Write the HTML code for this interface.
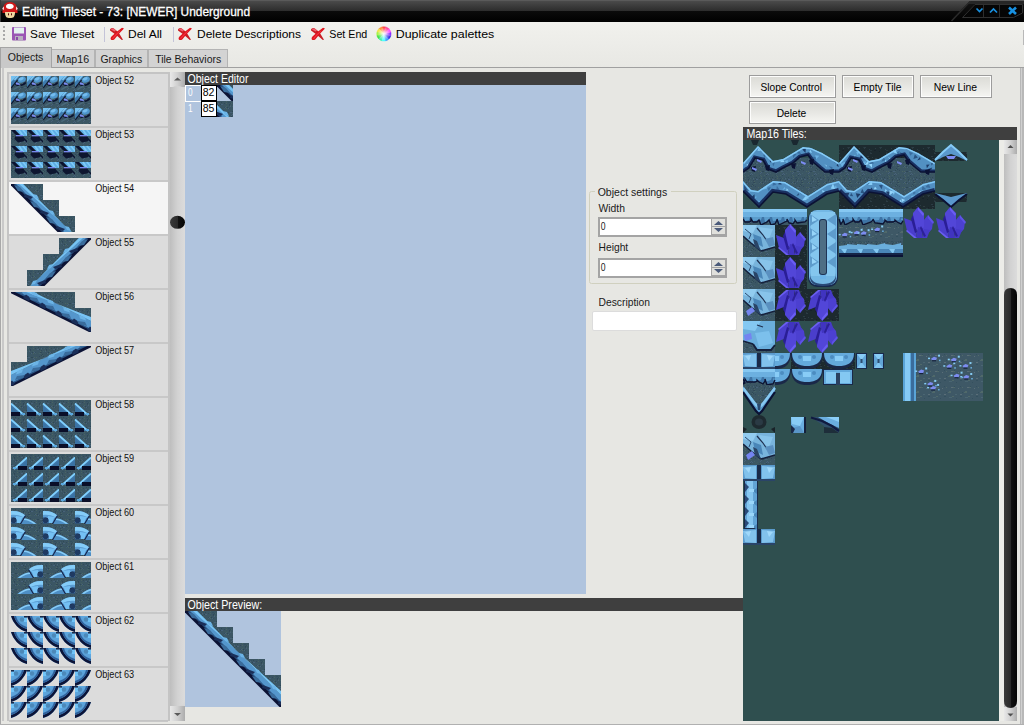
<!DOCTYPE html><html><head><meta charset="utf-8"><style>html,body{margin:0;padding:0;width:1024px;height:725px;overflow:hidden;background:#e7e7e3}svg{display:block}text{font-family:"Liberation Sans",sans-serif}</style></head><body>
<svg width="1024" height="725" viewBox="0 0 1024 725" shape-rendering="crispEdges">
<defs>
<linearGradient id="gTitleTop" x1="0" y1="0" x2="0" y2="1"><stop offset="0" stop-color="#585858"/><stop offset="0.1" stop-color="#4a4a4a"/><stop offset="1" stop-color="#2c2c2c"/></linearGradient>
<linearGradient id="gTitleBot" x1="0" y1="0" x2="0" y2="1"><stop offset="0" stop-color="#161616"/><stop offset="1" stop-color="#000"/></linearGradient>
<linearGradient id="gToolbar" x1="0" y1="0" x2="0" y2="1"><stop offset="0" stop-color="#f1f1ed"/><stop offset="1" stop-color="#e8e8e4"/></linearGradient>
<linearGradient id="gBtn" x1="0" y1="0" x2="0" y2="1"><stop offset="0" stop-color="#dcdcd7"/><stop offset="0.5" stop-color="#e7e7e3"/><stop offset="1" stop-color="#f4f4f1"/></linearGradient>
<linearGradient id="gScroll" x1="0" y1="0" x2="1" y2="0"><stop offset="0" stop-color="#bdbdbd"/><stop offset="0.45" stop-color="#cfcfcf"/><stop offset="1" stop-color="#d8d8d8"/></linearGradient>
<linearGradient id="gScrollBtn" x1="0" y1="0" x2="1" y2="0"><stop offset="0" stop-color="#e8e8e8"/><stop offset="0.5" stop-color="#d0d0d0"/><stop offset="1" stop-color="#acacac"/></linearGradient>
<linearGradient id="gThumbL" x1="0" y1="0" x2="1" y2="0"><stop offset="0" stop-color="#bebebe"/><stop offset="0.5" stop-color="#d2d2d2"/><stop offset="1" stop-color="#dcdcdc"/></linearGradient>
<linearGradient id="gThumbBlk" x1="0" y1="0" x2="1" y2="0"><stop offset="0" stop-color="#3a3a3a"/><stop offset="0.5" stop-color="#2a2a2a"/><stop offset="0.55" stop-color="#111"/><stop offset="1" stop-color="#050505"/></linearGradient>
<radialGradient id="gColor" cx="0.5" cy="0.5" r="0.5"><stop offset="0" stop-color="#fff"/><stop offset="1" stop-color="#fff" stop-opacity="0"/></radialGradient>
<linearGradient id="gX" x1="0" y1="0" x2="0" y2="1"><stop offset="0" stop-color="#e04848"/><stop offset="1" stop-color="#a01818"/></linearGradient>

<pattern id="tex" width="16" height="16" patternUnits="userSpaceOnUse">
<rect x="0" y="0" width="16" height="16" fill="#3b5664" />
<rect x="10" y="4" width="1" height="1" fill="#3e5a60" />
<rect x="1" y="2" width="1" height="1" fill="#456266" />
<rect x="11" y="1" width="1" height="1" fill="#34505e" />
<rect x="1" y="2" width="1" height="1" fill="#3e5a60" />
<rect x="13" y="2" width="1" height="1" fill="#34505e" />
<rect x="2" y="13" width="1" height="1" fill="#42606a" />
<rect x="3" y="7" width="1" height="1" fill="#42606a" />
<rect x="12" y="1" width="1" height="1" fill="#34505e" />
<rect x="1" y="4" width="1" height="1" fill="#33495a" />
<rect x="13" y="4" width="1" height="1" fill="#456266" />
<rect x="9" y="5" width="1" height="1" fill="#456266" />
<rect x="6" y="11" width="1" height="1" fill="#456266" />
<rect x="2" y="1" width="1" height="1" fill="#34505e" />
<rect x="15" y="13" width="1" height="1" fill="#48627a" />
<rect x="14" y="14" width="1" height="1" fill="#48627a" />
<rect x="9" y="7" width="1" height="1" fill="#4a6462" />
<rect x="7" y="2" width="1" height="1" fill="#33495a" />
<rect x="15" y="10" width="1" height="1" fill="#2f4858" />
<rect x="9" y="2" width="1" height="1" fill="#456266" />
<rect x="13" y="5" width="1" height="1" fill="#48627a" />
<rect x="4" y="15" width="1" height="1" fill="#3e5a60" />
<rect x="1" y="2" width="1" height="1" fill="#48627a" />
<rect x="10" y="11" width="1" height="1" fill="#2f4858" />
<rect x="14" y="2" width="1" height="1" fill="#456266" />
<rect x="8" y="15" width="1" height="1" fill="#456266" />
<rect x="1" y="9" width="1" height="1" fill="#2f4858" />
<rect x="9" y="12" width="1" height="1" fill="#48627a" />
<rect x="0" y="14" width="1" height="1" fill="#48627a" />
<rect x="5" y="3" width="1" height="1" fill="#2f4858" />
<rect x="1" y="6" width="1" height="1" fill="#33495a" />
<rect x="4" y="7" width="1" height="1" fill="#3e5a60" />
<rect x="12" y="15" width="1" height="1" fill="#456266" />
<rect x="5" y="14" width="1" height="1" fill="#3e5a60" />
<rect x="8" y="4" width="1" height="1" fill="#3e5a60" />
<rect x="8" y="13" width="1" height="1" fill="#48627a" />
<rect x="12" y="7" width="1" height="1" fill="#4a6462" />
<rect x="2" y="5" width="1" height="1" fill="#4a6462" />
<rect x="7" y="7" width="1" height="1" fill="#42606a" />
<rect x="15" y="5" width="1" height="1" fill="#33495a" />
<rect x="9" y="0" width="1" height="1" fill="#4a6462" />
<rect x="13" y="11" width="1" height="1" fill="#48627a" />
<rect x="4" y="1" width="1" height="1" fill="#2f4858" />
<rect x="12" y="12" width="1" height="1" fill="#3e5a60" />
<rect x="12" y="3" width="1" height="1" fill="#2f4858" />
<rect x="12" y="1" width="1" height="1" fill="#34505e" />
<rect x="2" y="6" width="1" height="1" fill="#2f4858" />
<rect x="5" y="3" width="1" height="1" fill="#48627a" />
<rect x="1" y="3" width="1" height="1" fill="#42606a" />
<rect x="4" y="3" width="1" height="1" fill="#48627a" />
<rect x="0" y="2" width="1" height="1" fill="#34505e" />
<rect x="12" y="4" width="1" height="1" fill="#33495a" />
<rect x="11" y="11" width="1" height="1" fill="#2f4858" />
<rect x="3" y="3" width="1" height="1" fill="#2f4858" />
<rect x="14" y="15" width="1" height="1" fill="#2f4858" />
<rect x="9" y="2" width="1" height="1" fill="#4a6462" />
<rect x="3" y="10" width="1" height="1" fill="#33495a" />
<rect x="15" y="5" width="1" height="1" fill="#42606a" />
<rect x="6" y="11" width="1" height="1" fill="#4a6462" />
<rect x="0" y="9" width="1" height="1" fill="#456266" />
<rect x="8" y="11" width="1" height="1" fill="#4a6462" />
<rect x="11" y="7" width="1" height="1" fill="#48627a" />
<rect x="7" y="6" width="1" height="1" fill="#34505e" />
<rect x="12" y="7" width="1" height="1" fill="#34505e" />
<rect x="15" y="11" width="1" height="1" fill="#42606a" />
<rect x="0" y="8" width="1" height="1" fill="#2f4858" />
<rect x="8" y="6" width="1" height="1" fill="#48627a" />
<rect x="14" y="11" width="1" height="1" fill="#48627a" />
<rect x="2" y="7" width="1" height="1" fill="#456266" />
<rect x="7" y="15" width="1" height="1" fill="#34505e" />
<rect x="10" y="6" width="1" height="1" fill="#2f4858" />
</pattern>
<pattern id="dark" width="16" height="16" patternUnits="userSpaceOnUse">
<rect x="0" y="0" width="16" height="16" fill="#1d2a2f" />
<rect x="0" y="15" width="1" height="1" fill="#18222a" />
<rect x="3" y="12" width="2" height="1" fill="#2c3c44" />
<rect x="5" y="13" width="1" height="1" fill="#18222a" />
<rect x="12" y="14" width="1" height="1" fill="#303c40" />
<rect x="5" y="5" width="1" height="1" fill="#2c3c44" />
<rect x="4" y="14" width="2" height="1" fill="#2c3c44" />
<rect x="11" y="4" width="1" height="1" fill="#2c3c44" />
<rect x="0" y="3" width="2" height="1" fill="#2c3c44" />
<rect x="6" y="6" width="2" height="1" fill="#26363c" />
<rect x="6" y="9" width="2" height="1" fill="#2c3c44" />
<rect x="8" y="13" width="1" height="1" fill="#2c3c44" />
<rect x="11" y="14" width="1" height="1" fill="#303c40" />
<rect x="4" y="0" width="1" height="1" fill="#303c40" />
<rect x="0" y="4" width="1" height="1" fill="#2c3c44" />
<rect x="15" y="3" width="2" height="1" fill="#26363c" />
<rect x="15" y="3" width="1" height="1" fill="#26363c" />
<rect x="6" y="8" width="1" height="1" fill="#26363c" />
<rect x="14" y="0" width="2" height="1" fill="#26363c" />
<rect x="10" y="6" width="2" height="1" fill="#18222a" />
<rect x="15" y="7" width="1" height="1" fill="#18222a" />
</pattern>
<pattern id="pebtex" width="16" height="16" patternUnits="userSpaceOnUse">
<rect x="0" y="0" width="16" height="16" fill="#3e5866" />
<rect x="14" y="4" width="1" height="1" fill="#5a6e78" />
<rect x="12" y="14" width="1" height="1" fill="#34505e" />
<rect x="7" y="13" width="1" height="1" fill="#4a6672" />
<rect x="9" y="3" width="2" height="1" fill="#50696a" />
<rect x="4" y="8" width="2" height="1" fill="#50696a" />
<rect x="7" y="3" width="2" height="1" fill="#5a6e78" />
<rect x="5" y="7" width="2" height="1" fill="#50696a" />
<rect x="12" y="10" width="1" height="1" fill="#5a6e78" />
<rect x="11" y="10" width="2" height="1" fill="#4a6672" />
<rect x="0" y="10" width="2" height="1" fill="#5a6e78" />
<rect x="0" y="12" width="2" height="1" fill="#34505e" />
<rect x="2" y="3" width="1" height="1" fill="#50696a" />
<rect x="2" y="8" width="1" height="1" fill="#34505e" />
<rect x="5" y="8" width="2" height="1" fill="#50696a" />
<rect x="8" y="12" width="2" height="1" fill="#50696a" />
<rect x="10" y="2" width="1" height="1" fill="#34505e" />
<rect x="5" y="13" width="2" height="1" fill="#4a6672" />
<rect x="0" y="2" width="1" height="1" fill="#34505e" />
</pattern>
<linearGradient id="gIce" x1="0" y1="0" x2="1" y2="1"><stop offset="0" stop-color="#7cc8f4"/><stop offset="1" stop-color="#3e7ab0"/></linearGradient>
<linearGradient id="gIceV" x1="0" y1="0" x2="0" y2="1"><stop offset="0" stop-color="#6cb8ec"/><stop offset="1" stop-color="#2e5c8c"/></linearGradient>
<linearGradient id="gPetal" x1="1" y1="0" x2="0" y2="1"><stop offset="0" stop-color="#64b0e8"/><stop offset="0.6" stop-color="#5498d0"/><stop offset="1" stop-color="#2a5088"/></linearGradient>
<linearGradient id="gPetal2" x1="0" y1="0" x2="1" y2="1"><stop offset="0" stop-color="#5aa8e0"/><stop offset="0.55" stop-color="#4a8cc4"/><stop offset="1" stop-color="#1c3c6c"/></linearGradient>
<g id="t52" shape-rendering="geometricPrecision">
<rect x="0" y="0" width="16" height="16" fill="url(#tex)" />
<polygon points="0,0 9,0 4,6 0,11" fill="#3e7cb0" />
<polygon points="0,0 6,0 0,6" fill="#74c0f0" />
<polygon points="6,0 8,0 4,4.5 3,3.5" fill="#80c8f4" />
<ellipse cx="10.8" cy="3.6" rx="4.2" ry="2.9" transform="rotate(-22 10.8 3.6)" fill="#4e96cc"/>
<ellipse cx="10.2" cy="2.8" rx="2.6" ry="1.5" transform="rotate(-22 10.2 2.8)" fill="#74bcee"/>
<path d="M4.5,7.5 C7.5,9.5 11,9 14.5,5.5 L15,7.5 C12,10.5 7.5,11 4,9 Z" fill="#0c1430"/>
<polygon points="4.5,6 8.5,7.5 9,9 5,8.5" fill="#7c8cf4" />
<line x1="0.3" y1="12" x2="6.5" y2="4" stroke="#0c1430" stroke-width="1.1"/>
<polygon points="2,13 9,9 10,10 3,14" fill="#4a6a7c" />
</g>
<g id="t53" shape-rendering="geometricPrecision">
<rect x="0" y="0" width="16" height="16" fill="url(#tex)" />
<polygon points="4,0 16,0 16,6 10,6" fill="#5eaee4" />
<polygon points="7,0 9,0 13,6 11,6" fill="#80ccf8" />
<polygon points="11,0 13,0 16,4 16,6" fill="#80ccf8" />
<polygon points="0,0 4,0 10,6 6,6" fill="#0c1430" />
<polygon points="5,5 12,5 12,6.5 5,6.5" fill="#7888f0" />
<polygon points="4,6.5 12,6.5 13.5,11 7,12.5 3.5,9" fill="#0e1630" />
<line x1="11.5" y1="7" x2="16" y2="12" stroke="#0c1430" stroke-width="1.3"/>
</g>
<g id="t58" shape-rendering="geometricPrecision">
<rect x="0" y="0" width="16" height="16" fill="url(#tex)" />
<polygon points="0,3 13,15 0,15" fill="#4078aa" />
<polygon points="0,6 0,12 6,12" fill="#3a72a4" />
<line x1="0" y1="3.5" x2="13" y2="15" stroke="#80d0ff" stroke-width="1.7"/>
<rect x="0" y="12" width="9" height="4" fill="#0a0e28" />
<rect x="11" y="13" width="3" height="2" fill="#5aa8e0" />
</g>
<g id="t59"><use href="#t58" transform="translate(16,0) scale(-1,1)"/></g>
<g id="t60" shape-rendering="geometricPrecision">
<rect x="0" y="0" width="32" height="16" fill="url(#tex)" />
<path d="M0,3 C5,2.5 10,3.5 14.5,7.5 L10,15 L0,15 Z" fill="#5a9cd2"/>
<path d="M0,3 C5,2.5 10,3.5 14.5,7.5 L12,9 C8,7 4,6.5 0,7 Z" fill="#84ccf8"/>
<path d="M5,8 L12,9 L9,15 L4,15 Z" fill="#74c0f4"/>
<path d="M11,10 C16,10 21,12 26,16 L10,16 Z" fill="#4e8ec4"/>
<path d="M13,10.5 C17,10.5 21,12.5 25,15.5 L23,16 C19,13.5 16,12 13,12 Z" fill="#86ccf8"/>
<ellipse cx="2.6" cy="12.3" rx="2.8" ry="2.8" fill="#0e1634"/>
<path d="M0,9 C2,9 5,10 6,13 L6,16 L0,16 Z" fill="#2c5482" opacity="0.6"/>
<line x1="14.5" y1="7.5" x2="9.5" y2="16" stroke="#142048" stroke-width="1.1"/>
</g>
<g id="t61"><use href="#t60" transform="translate(32,0) scale(-1,1)"/></g>
<g id="t62" shape-rendering="geometricPrecision">
<path d="M0,0 L16,0 L16,16 C8,14 2,7 0,0 Z" fill="url(#gPetal)"/>
<path d="M0,0 C2,7 8,14 16,16 L16,13 C10,11.5 5,7 3,0 Z" fill="#0c1438"/>
<path d="M3,0 C5,7 10,11.5 16,13 L16,11 C11,9.5 6.5,6.5 5,0 Z" fill="#30609a"/>
<rect x="13" y="2" width="3" height="4" fill="#70c4f8" />
<circle cx="11" cy="3.5" r="2.2" fill="#4c88b8"/>
<rect x="13" y="0" width="3" height="1.5" fill="#1a2a48" />
</g>
<g id="t63"><use href="#t62" transform="translate(16,0) scale(-1,1)"/></g>
<g id="slope1" shape-rendering="geometricPrecision">
<polygon points="0,0 32,0 32,16 48,16 48,32 64,32 64,48 80,48 80,64 96,64 96,96" fill="url(#tex)" />
<polygon points="0,0 12,0 96,84 96,96" fill="#5496cc" />
<polygon points="0,0 5,0 96,91 96,96" fill="#2a5282" />
<polygon points="8,0 12,0 96,84 96,80" fill="#78c4f4" />
<polygon points="0,0 3,0 96,93 96,96 94.5,96 0,1.5" fill="#0b1234" />
<polygon points="14,10 22,13 20,15 13,13" fill="#1a2e58" />
<polygon points="3,1 9,3 13,8 7,7" fill="#3a6c9c" />
<polygon points="22,10 26,11 28,15 24,14" fill="#6cb4e6" />
<polygon points="30,26 38,29 36,31 29,29" fill="#1a2e58" />
<polygon points="19,17 25,19 29,24 23,23" fill="#3a6c9c" />
<polygon points="38,26 42,27 44,31 40,30" fill="#6cb4e6" />
<polygon points="46,42 54,45 52,47 45,45" fill="#1a2e58" />
<polygon points="35,33 41,35 45,40 39,39" fill="#3a6c9c" />
<polygon points="54,42 58,43 60,47 56,46" fill="#6cb4e6" />
<polygon points="62,58 70,61 68,63 61,61" fill="#1a2e58" />
<polygon points="51,49 57,51 61,56 55,55" fill="#3a6c9c" />
<polygon points="70,58 74,59 76,63 72,62" fill="#6cb4e6" />
<polygon points="78,74 86,77 84,79 77,77" fill="#1a2e58" />
<polygon points="67,65 73,67 77,72 71,71" fill="#3a6c9c" />
<polygon points="86,74 90,75 92,79 88,78" fill="#6cb4e6" />
<polygon points="94,90 102,93 100,95 93,93" fill="#1a2e58" />
<polygon points="83,81 89,83 93,88 87,87" fill="#3a6c9c" />
<polygon points="102,90 106,91 108,95 104,94" fill="#6cb4e6" />
</g>
<g id="slope2" shape-rendering="geometricPrecision">
<polygon points="0,0 64,0 64,16 80,16 80,40" fill="url(#tex)" />
<polygon points="0,0 22,0 80,29 80,40" fill="#5496cc" />
<polygon points="0,0 8,0 80,37 80,40" fill="#2a5282" />
<polygon points="15,0 22,0 80,29 80,25" fill="#78c4f4" />
<polygon points="0,0 4,0 80,38.5 80,40 78,40 0,1.2" fill="#0b1234" />
<polygon points="12,6 15,2.5 20,6 18,9" fill="#1a2e58" />
<polygon points="2,-3 10,-2 12,2 4,0" fill="#3a6c9c" />
<polygon points="20,-1 26,1 27,4.5 21,2.5" fill="#6cb4e6" />
<polygon points="28,14 31,10.5 36,14 34,17" fill="#1a2e58" />
<polygon points="18,5 26,6 28,10 20,8" fill="#3a6c9c" />
<polygon points="36,7 42,9 43,12.5 37,10.5" fill="#6cb4e6" />
<polygon points="44,22 47,18.5 52,22 50,25" fill="#1a2e58" />
<polygon points="34,13 42,14 44,18 36,16" fill="#3a6c9c" />
<polygon points="52,15 58,17 59,20.5 53,18.5" fill="#6cb4e6" />
<polygon points="60,30 63,26.5 68,30 66,33" fill="#1a2e58" />
<polygon points="50,21 58,22 60,26 52,24" fill="#3a6c9c" />
<polygon points="68,23 74,25 75,28.5 69,26.5" fill="#6cb4e6" />
<polygon points="76,38 79,34.5 84,38 82,41" fill="#1a2e58" />
<polygon points="66,29 74,30 76,34 68,32" fill="#3a6c9c" />
<polygon points="84,31 90,33 91,36.5 85,34.5" fill="#6cb4e6" />
</g>
</defs>
<rect x="0" y="0" width="1024" height="725" fill="#e7e7e3" />
<rect x="0" y="0" width="1024" height="22" fill="url(#gTitleBot)" />
<polygon points="0,0 971,0 960,11 0,11" fill="url(#gTitleTop)" shape-rendering="geometricPrecision"/>
<polygon points="971,0 1024,0 1024,4 967.5,4" fill="#262626" shape-rendering="geometricPrecision"/>
<line x1="971.5" y1="0" x2="951.5" y2="21" stroke="#2a2a2a" stroke-width="1.5" shape-rendering="geometricPrecision"/>
<rect x="0" y="0" width="1024" height="1" fill="#5a5a5a" />
<rect x="0" y="0" width="1" height="22" fill="#3a3a3a" />
<polygon points="962.5,17.5 975,4.5 1022.5,4.5 1022.5,13 1013.5,17.5" fill="#050505" stroke="#303030" stroke-width="1" shape-rendering="geometricPrecision"/>
<line x1="983.5" y1="5" x2="983.5" y2="17" stroke="#2c2c2c"/><line x1="999.5" y1="5" x2="999.5" y2="17" stroke="#2c2c2c"/>
<polyline points="976.5,8.5 979.5,11.5 982.5,8.5" fill="none" stroke="#1890e0" stroke-width="1.7" shape-rendering="geometricPrecision"/>
<polyline points="990,12.5 993.5,9 997,12.5" fill="none" stroke="#1890e0" stroke-width="1.7" shape-rendering="geometricPrecision"/>
<path d="M1009,7.5 L1016,14 M1016,7.5 L1009,14" fill="none" stroke="#1890e0" stroke-width="2.6" shape-rendering="geometricPrecision"/>
<g shape-rendering="geometricPrecision">
<path d="M2.5,11.5 C2.5,5 6,2 10,2 C14,2 17.5,5 17.5,11.5 L17.5,13 L2.5,13 Z" fill="#d01818"/>
<ellipse cx="9.8" cy="6.3" rx="3.8" ry="2.6" fill="#fff"/>
<path d="M2.3,9 C2.6,7.6 3.2,6.8 3.8,6.4 L3.8,10 Z" fill="#fff"/>
<path d="M17.7,9 C17.4,7.6 16.8,6.8 16.2,6.4 L16.2,10 Z" fill="#fff"/>
<path d="M5,12 C5,17 6.5,18 10,18 C13.5,18 15,17 15,12 Z" fill="#f0d8a0"/>
<rect x="8" y="13.3" width="1" height="2" fill="#5a1010"/><rect x="11" y="13.3" width="1" height="2" fill="#5a1010"/>
</g>
<text x="22" y="15.5" font-size="13" fill="#fff" stroke="#fff" stroke-width="0.3" textLength="228" lengthAdjust="spacingAndGlyphs">Editing Tileset - 73: [NEWER] Underground</text>
<rect x="0" y="22" width="1024" height="45" fill="url(#gToolbar)" />
<rect x="1023" y="30" width="1" height="15" fill="#b8b8b8" />
<rect x="3" y="26" width="2" height="2" fill="#a8a8a8" />
<rect x="3" y="30" width="2" height="2" fill="#a8a8a8" />
<rect x="3" y="34" width="2" height="2" fill="#a8a8a8" />
<rect x="3" y="38" width="2" height="2" fill="#a8a8a8" />
<g shape-rendering="geometricPrecision">
<rect x="12" y="27" width="14" height="13.5" rx="1" fill="#9a56b4"/>
<rect x="14" y="27.5" width="10" height="6" fill="#e4f2f0"/>
<rect x="15" y="36" width="8" height="4.5" fill="#b8b0c0"/>
<rect x="16" y="37" width="2" height="3" fill="#8a4aa6"/>
</g>
<text x="30" y="37.8" font-size="11.6" fill="#000" textLength="64.4" lengthAdjust="spacingAndGlyphs">Save Tileset</text>
<rect x="104" y="27" width="1" height="15" fill="#c4c4d8" />
<rect x="173" y="27" width="1" height="15" fill="#c4c4d8" />
<g shape-rendering="geometricPrecision" transform="translate(110,27)">
<path d="M0,2.5 Q0.8,0.3 3.5,1.2 Q7,3.5 9.5,7 L13,12.8 L11.8,13 L5.5,7.5 Q2,5.2 0,3.6 Z" fill="#c81e24"/>
<path d="M0.8,2.2 Q1.5,1 3.2,1.6 Q5,2.6 6,3.6 L4.5,4.5 Q2.5,3.4 0.8,2.2 Z" fill="#f06070"/>
<path d="M12,0.8 L14,1.6 Q9,6.5 4.5,12.2 Q2.5,13.8 0.8,12.6 Q0,11.2 1.5,9.5 Q6,5 12,0.8 Z" fill="#e0141c"/>
<path d="M2,11.5 Q6,6.5 10,3.5 L10.5,4 Q6.5,7.5 3,12 Z" fill="#f03848"/>
</g>
<text x="128" y="37.8" font-size="11.6" fill="#000" textLength="34" lengthAdjust="spacingAndGlyphs">Del All</text>
<g shape-rendering="geometricPrecision" transform="translate(178,27)">
<path d="M0,2.5 Q0.8,0.3 3.5,1.2 Q7,3.5 9.5,7 L13,12.8 L11.8,13 L5.5,7.5 Q2,5.2 0,3.6 Z" fill="#c81e24"/>
<path d="M0.8,2.2 Q1.5,1 3.2,1.6 Q5,2.6 6,3.6 L4.5,4.5 Q2.5,3.4 0.8,2.2 Z" fill="#f06070"/>
<path d="M12,0.8 L14,1.6 Q9,6.5 4.5,12.2 Q2.5,13.8 0.8,12.6 Q0,11.2 1.5,9.5 Q6,5 12,0.8 Z" fill="#e0141c"/>
<path d="M2,11.5 Q6,6.5 10,3.5 L10.5,4 Q6.5,7.5 3,12 Z" fill="#f03848"/>
</g>
<text x="197" y="37.8" font-size="11.6" fill="#000" textLength="104" lengthAdjust="spacingAndGlyphs">Delete Descriptions</text>
<g shape-rendering="geometricPrecision" transform="translate(311,27)">
<path d="M0,2.5 Q0.8,0.3 3.5,1.2 Q7,3.5 9.5,7 L13,12.8 L11.8,13 L5.5,7.5 Q2,5.2 0,3.6 Z" fill="#c81e24"/>
<path d="M0.8,2.2 Q1.5,1 3.2,1.6 Q5,2.6 6,3.6 L4.5,4.5 Q2.5,3.4 0.8,2.2 Z" fill="#f06070"/>
<path d="M12,0.8 L14,1.6 Q9,6.5 4.5,12.2 Q2.5,13.8 0.8,12.6 Q0,11.2 1.5,9.5 Q6,5 12,0.8 Z" fill="#e0141c"/>
<path d="M2,11.5 Q6,6.5 10,3.5 L10.5,4 Q6.5,7.5 3,12 Z" fill="#f03848"/>
</g>
<text x="329.3" y="37.8" font-size="11.6" fill="#000" textLength="38" lengthAdjust="spacingAndGlyphs">Set End</text>
<g shape-rendering="geometricPrecision">
<defs><radialGradient id="cwW" cx="0.5" cy="0.5" r="0.5"><stop offset="0" stop-color="#fff" stop-opacity="1"/><stop offset="0.45" stop-color="#fff" stop-opacity="0.55"/><stop offset="1" stop-color="#fff" stop-opacity="0"/></radialGradient></defs>
<path d="M383.9,33.9 L385.76,26.95 A7.2,7.2 0 0 0 382.04,26.95 Z" fill="#ff3030" stroke="#ff3030" stroke-width="0.4"/><path d="M383.9,33.9 L382.04,26.95 A7.2,7.2 0 0 0 378.81,28.81 Z" fill="#ff8020" stroke="#ff8020" stroke-width="0.4"/><path d="M383.9,33.9 L378.81,28.81 A7.2,7.2 0 0 0 376.95,32.04 Z" fill="#f0e030" stroke="#f0e030" stroke-width="0.4"/><path d="M383.9,33.9 L376.95,32.04 A7.2,7.2 0 0 0 376.95,35.76 Z" fill="#a0f030" stroke="#a0f030" stroke-width="0.4"/><path d="M383.9,33.9 L376.95,35.76 A7.2,7.2 0 0 0 378.81,38.99 Z" fill="#30e030" stroke="#30e030" stroke-width="0.4"/><path d="M383.9,33.9 L378.81,38.99 A7.2,7.2 0 0 0 382.04,40.85 Z" fill="#30f0a0" stroke="#30f0a0" stroke-width="0.4"/><path d="M383.9,33.9 L382.04,40.85 A7.2,7.2 0 0 0 385.76,40.85 Z" fill="#40ffff" stroke="#40ffff" stroke-width="0.4"/><path d="M383.9,33.9 L385.76,40.85 A7.2,7.2 0 0 0 388.99,38.99 Z" fill="#3090ff" stroke="#3090ff" stroke-width="0.4"/><path d="M383.9,33.9 L388.99,38.99 A7.2,7.2 0 0 0 390.85,35.76 Z" fill="#2020e0" stroke="#2020e0" stroke-width="0.4"/><path d="M383.9,33.9 L390.85,35.76 A7.2,7.2 0 0 0 390.85,32.04 Z" fill="#8020ff" stroke="#8020ff" stroke-width="0.4"/><path d="M383.9,33.9 L390.85,32.04 A7.2,7.2 0 0 0 388.99,28.81 Z" fill="#ff40ff" stroke="#ff40ff" stroke-width="0.4"/><path d="M383.9,33.9 L388.99,28.81 A7.2,7.2 0 0 0 385.76,26.95 Z" fill="#ff3090" stroke="#ff3090" stroke-width="0.4"/>
<circle cx="383.9" cy="33.9" r="7.2" fill="url(#cwW)"/>
</g>
<text x="395.7" y="37.8" font-size="11.6" fill="#000" textLength="98.6" lengthAdjust="spacingAndGlyphs">Duplicate palettes</text>
<rect x="0" y="67" width="1024" height="1" fill="#a0a0a0" />
<rect x="51" y="49" width="44" height="18" fill="#b4b4b4" />
<rect x="52" y="50" width="42" height="17" fill="#d3d3d3" />
<text x="56.5" y="62.8" font-size="11" fill="#1a1a1a" textLength="32.6" lengthAdjust="spacingAndGlyphs">Map16</text>
<rect x="95" y="49" width="53" height="18" fill="#b4b4b4" />
<rect x="96" y="50" width="51" height="17" fill="#d3d3d3" />
<text x="100.5" y="62.8" font-size="11" fill="#1a1a1a" textLength="41.8" lengthAdjust="spacingAndGlyphs">Graphics</text>
<rect x="148" y="49" width="80" height="18" fill="#b4b4b4" />
<rect x="149" y="50" width="78" height="17" fill="#d3d3d3" />
<text x="155.2" y="62.8" font-size="11" fill="#1a1a1a" textLength="66" lengthAdjust="spacingAndGlyphs">Tile Behaviors</text>
<rect x="0" y="47" width="52" height="21" fill="#a4a4a4" />
<rect x="1" y="48" width="50" height="20" fill="#c9c9c9" />
<text x="7.7" y="61" font-size="11" fill="#1a1a1a" textLength="35.7" lengthAdjust="spacingAndGlyphs">Objects</text>
<rect x="0" y="68" width="1024" height="657" fill="#e7e7e3" />
<rect x="0" y="68" width="1" height="657" fill="#a8a8a8" />
<rect x="2" y="68" width="2" height="653" fill="#c9c9c9" />
<rect x="1017" y="68" width="3" height="653" fill="#e7e7e3" />
<rect x="1020" y="68" width="4" height="657" fill="#b8b8b8" />
<rect x="1021" y="68" width="1" height="657" fill="#d0d0d0" />
<rect x="0" y="724" width="1024" height="1" fill="#b0b0b0" />
<rect x="7" y="72" width="178" height="649" fill="#c4c4c4" />
<rect x="9" y="74" width="159" height="646" fill="#dcdcdc" />
<rect x="9" y="74" width="159" height="52" fill="#dcdcdc" />
<rect x="9" y="126" width="159" height="2" fill="#c8c8c8" />
<text x="95.2" y="84" font-size="10" fill="#111" textLength="39" lengthAdjust="spacingAndGlyphs">Object 52</text>
<rect x="9" y="128" width="159" height="52" fill="#dcdcdc" />
<rect x="9" y="180" width="159" height="2" fill="#c8c8c8" />
<text x="95.2" y="138" font-size="10" fill="#111" textLength="39" lengthAdjust="spacingAndGlyphs">Object 53</text>
<rect x="9" y="182" width="159" height="52" fill="#f5f5f5" />
<rect x="9" y="234" width="159" height="2" fill="#c8c8c8" />
<text x="95.2" y="192" font-size="10" fill="#111" textLength="39" lengthAdjust="spacingAndGlyphs">Object 54</text>
<rect x="9" y="236" width="159" height="52" fill="#dcdcdc" />
<rect x="9" y="288" width="159" height="2" fill="#c8c8c8" />
<text x="95.2" y="246" font-size="10" fill="#111" textLength="39" lengthAdjust="spacingAndGlyphs">Object 55</text>
<rect x="9" y="290" width="159" height="52" fill="#dcdcdc" />
<rect x="9" y="342" width="159" height="2" fill="#c8c8c8" />
<text x="95.2" y="300" font-size="10" fill="#111" textLength="39" lengthAdjust="spacingAndGlyphs">Object 56</text>
<rect x="9" y="344" width="159" height="52" fill="#dcdcdc" />
<rect x="9" y="396" width="159" height="2" fill="#c8c8c8" />
<text x="95.2" y="354" font-size="10" fill="#111" textLength="39" lengthAdjust="spacingAndGlyphs">Object 57</text>
<rect x="9" y="398" width="159" height="52" fill="#dcdcdc" />
<rect x="9" y="450" width="159" height="2" fill="#c8c8c8" />
<text x="95.2" y="408" font-size="10" fill="#111" textLength="39" lengthAdjust="spacingAndGlyphs">Object 58</text>
<rect x="9" y="452" width="159" height="52" fill="#dcdcdc" />
<rect x="9" y="504" width="159" height="2" fill="#c8c8c8" />
<text x="95.2" y="462" font-size="10" fill="#111" textLength="39" lengthAdjust="spacingAndGlyphs">Object 59</text>
<rect x="9" y="506" width="159" height="52" fill="#dcdcdc" />
<rect x="9" y="558" width="159" height="2" fill="#c8c8c8" />
<text x="95.2" y="516" font-size="10" fill="#111" textLength="39" lengthAdjust="spacingAndGlyphs">Object 60</text>
<rect x="9" y="560" width="159" height="52" fill="#dcdcdc" />
<rect x="9" y="612" width="159" height="2" fill="#c8c8c8" />
<text x="95.2" y="570" font-size="10" fill="#111" textLength="39" lengthAdjust="spacingAndGlyphs">Object 61</text>
<rect x="9" y="614" width="159" height="52" fill="#dcdcdc" />
<rect x="9" y="666" width="159" height="2" fill="#c8c8c8" />
<text x="95.2" y="624" font-size="10" fill="#111" textLength="39" lengthAdjust="spacingAndGlyphs">Object 62</text>
<rect x="9" y="668" width="159" height="52" fill="#dcdcdc" />
<rect x="9" y="720" width="159" height="2" fill="#c8c8c8" />
<text x="95.2" y="678" font-size="10" fill="#111" textLength="39" lengthAdjust="spacingAndGlyphs">Object 63</text>
<rect x="9" y="720" width="159" height="1" fill="#c4c4c4" />
<clipPath id="clipT"><rect x="0" y="0" width="80" height="48"/></clipPath>
<g transform="translate(11,76)" clip-path="url(#clipT)">
<use href="#t52" x="0" y="0"/>
<use href="#t52" x="16" y="0"/>
<use href="#t52" x="32" y="0"/>
<use href="#t52" x="48" y="0"/>
<use href="#t52" x="64" y="0"/>
<use href="#t52" x="0" y="16"/>
<use href="#t52" x="16" y="16"/>
<use href="#t52" x="32" y="16"/>
<use href="#t52" x="48" y="16"/>
<use href="#t52" x="64" y="16"/>
<use href="#t52" x="0" y="32"/>
<use href="#t52" x="16" y="32"/>
<use href="#t52" x="32" y="32"/>
<use href="#t52" x="48" y="32"/>
<use href="#t52" x="64" y="32"/>
</g>
<g transform="translate(11,130)" clip-path="url(#clipT)">
<use href="#t53" x="0" y="0"/>
<use href="#t53" x="16" y="0"/>
<use href="#t53" x="32" y="0"/>
<use href="#t53" x="48" y="0"/>
<use href="#t53" x="64" y="0"/>
<use href="#t53" x="0" y="16"/>
<use href="#t53" x="16" y="16"/>
<use href="#t53" x="32" y="16"/>
<use href="#t53" x="48" y="16"/>
<use href="#t53" x="64" y="16"/>
<use href="#t53" x="0" y="32"/>
<use href="#t53" x="16" y="32"/>
<use href="#t53" x="32" y="32"/>
<use href="#t53" x="48" y="32"/>
<use href="#t53" x="64" y="32"/>
</g>
<g transform="translate(11,184)" clip-path="url(#clipT)">
<use href="#slope1"/>
</g>
<g transform="translate(11,238)" clip-path="url(#clipT)">
<use href="#slope1" transform="translate(80,0) scale(-1,1)"/>
</g>
<g transform="translate(11,292)" clip-path="url(#clipT)">
<use href="#slope2"/>
</g>
<g transform="translate(11,346)" clip-path="url(#clipT)">
<use href="#slope2" transform="translate(80,0) scale(-1,1)"/>
</g>
<g transform="translate(11,400)" clip-path="url(#clipT)">
<use href="#t58" x="0" y="0"/>
<use href="#t58" x="16" y="0"/>
<use href="#t58" x="32" y="0"/>
<use href="#t58" x="48" y="0"/>
<use href="#t58" x="64" y="0"/>
<use href="#t58" x="0" y="16"/>
<use href="#t58" x="16" y="16"/>
<use href="#t58" x="32" y="16"/>
<use href="#t58" x="48" y="16"/>
<use href="#t58" x="64" y="16"/>
<use href="#t58" x="0" y="32"/>
<use href="#t58" x="16" y="32"/>
<use href="#t58" x="32" y="32"/>
<use href="#t58" x="48" y="32"/>
<use href="#t58" x="64" y="32"/>
</g>
<g transform="translate(11,454)" clip-path="url(#clipT)">
<use href="#t59" x="0" y="0"/>
<use href="#t59" x="16" y="0"/>
<use href="#t59" x="32" y="0"/>
<use href="#t59" x="48" y="0"/>
<use href="#t59" x="64" y="0"/>
<use href="#t59" x="0" y="16"/>
<use href="#t59" x="16" y="16"/>
<use href="#t59" x="32" y="16"/>
<use href="#t59" x="48" y="16"/>
<use href="#t59" x="64" y="16"/>
<use href="#t59" x="0" y="32"/>
<use href="#t59" x="16" y="32"/>
<use href="#t59" x="32" y="32"/>
<use href="#t59" x="48" y="32"/>
<use href="#t59" x="64" y="32"/>
</g>
<g transform="translate(11,508)" clip-path="url(#clipT)">
<use href="#t60" x="0" y="0"/>
<use href="#t60" x="32" y="0"/>
<use href="#t60" x="64" y="0"/>
<use href="#t60" x="0" y="16"/>
<use href="#t60" x="32" y="16"/>
<use href="#t60" x="64" y="16"/>
<use href="#t60" x="0" y="32"/>
<use href="#t60" x="32" y="32"/>
<use href="#t60" x="64" y="32"/>
</g>
<g transform="translate(11,562)" clip-path="url(#clipT)">
<use href="#t61" x="0" y="0"/>
<use href="#t61" x="32" y="0"/>
<use href="#t61" x="64" y="0"/>
<use href="#t61" x="0" y="16"/>
<use href="#t61" x="32" y="16"/>
<use href="#t61" x="64" y="16"/>
<use href="#t61" x="0" y="32"/>
<use href="#t61" x="32" y="32"/>
<use href="#t61" x="64" y="32"/>
</g>
<g transform="translate(11,616)" clip-path="url(#clipT)">
<use href="#t62" x="0" y="0"/>
<use href="#t62" x="16" y="0"/>
<use href="#t62" x="32" y="0"/>
<use href="#t62" x="48" y="0"/>
<use href="#t62" x="64" y="0"/>
<use href="#t62" x="0" y="16"/>
<use href="#t62" x="16" y="16"/>
<use href="#t62" x="32" y="16"/>
<use href="#t62" x="48" y="16"/>
<use href="#t62" x="64" y="16"/>
<use href="#t62" x="0" y="32"/>
<use href="#t62" x="16" y="32"/>
<use href="#t62" x="32" y="32"/>
<use href="#t62" x="48" y="32"/>
<use href="#t62" x="64" y="32"/>
</g>
<g transform="translate(11,670)" clip-path="url(#clipT)">
<use href="#t63" x="0" y="0"/>
<use href="#t63" x="16" y="0"/>
<use href="#t63" x="32" y="0"/>
<use href="#t63" x="48" y="0"/>
<use href="#t63" x="64" y="0"/>
<use href="#t63" x="0" y="16"/>
<use href="#t63" x="16" y="16"/>
<use href="#t63" x="32" y="16"/>
<use href="#t63" x="48" y="16"/>
<use href="#t63" x="64" y="16"/>
<use href="#t63" x="0" y="32"/>
<use href="#t63" x="16" y="32"/>
<use href="#t63" x="32" y="32"/>
<use href="#t63" x="48" y="32"/>
<use href="#t63" x="64" y="32"/>
</g>
<rect x="168" y="72" width="2" height="649" fill="#c4c4c4" />
<rect x="170" y="72" width="15" height="649" fill="url(#gScroll)" />
<rect x="170" y="72" width="15" height="15" fill="url(#gScrollBtn)" />
<rect x="170" y="706" width="15" height="15" fill="url(#gScrollBtn)" />
<path d="M170,93 Q170,86 177.5,86 Q185,86 185,93 L185,699 Q185,706 177.5,706 Q170,706 170,699 Z" fill="url(#gThumbL)" shape-rendering="geometricPrecision"/>
<path d="M174,80.5 L177.5,77.5 L181,80.5 Z" fill="#5a5a5a" shape-rendering="geometricPrecision"/>
<path d="M174,713 L177.5,716 L181,713 Z" fill="#5a5a5a" shape-rendering="geometricPrecision"/>
<ellipse cx="177.5" cy="222.3" rx="7.5" ry="6.5" fill="url(#gThumbBlk)" shape-rendering="geometricPrecision"/>
<rect x="185" y="72" width="401" height="13" fill="#3f3f3f" />
<text x="187.5" y="83" font-size="12" fill="#fff" textLength="61" lengthAdjust="spacingAndGlyphs">Object Editor</text>
<rect x="185" y="85" width="401" height="509" fill="#b0c4de" />
<rect x="185" y="85" width="16" height="16" fill="none" stroke="#fff" stroke-width="1" transform="translate(0.5,0.5)" width="15" height="15"/>
<text x="188" y="96" font-size="11" fill="#fff" textLength="4.6" lengthAdjust="spacingAndGlyphs">0</text>
<text x="188" y="112" font-size="11" fill="#fff" textLength="4.6" lengthAdjust="spacingAndGlyphs">1</text>
<rect x="201" y="85" width="16" height="16" fill="#000" />
<rect x="202" y="86" width="14" height="14" fill="#fff" />
<text x="202.7" y="96" font-size="11" fill="#000" textLength="11.7" lengthAdjust="spacingAndGlyphs">82</text>
<rect x="201" y="101" width="16" height="16" fill="#000" />
<rect x="202" y="102" width="14" height="14" fill="#fff" />
<text x="202.7" y="112" font-size="11" fill="#000" textLength="11.7" lengthAdjust="spacingAndGlyphs">85</text>
<clipPath id="clip82"><rect x="217" y="85" width="16" height="16"/></clipPath><g clip-path="url(#clip82)"><use href="#slope1" x="217" y="85"/></g>
<clipPath id="clip85"><rect x="217" y="101" width="16" height="16"/></clipPath><g clip-path="url(#clip85)"><use href="#slope1" x="201" y="101"/></g>
<rect x="185" y="598" width="558" height="13" fill="#3f3f3f" />
<text x="187.4" y="609" font-size="12" fill="#fff" textLength="74.8" lengthAdjust="spacingAndGlyphs">Object Preview:</text>
<rect x="185" y="611" width="96" height="96" fill="#b0c4de" />
<clipPath id="clipPrev"><rect x="185" y="611" width="96" height="96"/></clipPath><g clip-path="url(#clipPrev)"><use href="#slope1" x="185" y="611"/></g>
<rect x="749" y="75" width="87" height="23" fill="#9c9c9c" />
<rect x="750" y="76" width="85" height="21" fill="#fdfdfc" />
<rect x="751" y="77" width="83" height="19" fill="url(#gBtn)" />
<text x="760.5" y="91" font-size="11.4" fill="#000" textLength="61.5" lengthAdjust="spacingAndGlyphs">Slope Control</text>
<rect x="842" y="75" width="72" height="23" fill="#9c9c9c" />
<rect x="843" y="76" width="70" height="21" fill="#fdfdfc" />
<rect x="844" y="77" width="68" height="19" fill="url(#gBtn)" />
<text x="853.6" y="91" font-size="11.4" fill="#000" textLength="47.8" lengthAdjust="spacingAndGlyphs">Empty Tile</text>
<rect x="920" y="75" width="72" height="23" fill="#9c9c9c" />
<rect x="921" y="76" width="70" height="21" fill="#fdfdfc" />
<rect x="922" y="77" width="68" height="19" fill="url(#gBtn)" />
<text x="933.8" y="91" font-size="11.4" fill="#000" textLength="43.3" lengthAdjust="spacingAndGlyphs">New Line</text>
<rect x="749" y="101" width="87" height="23" fill="#9c9c9c" />
<rect x="750" y="102" width="85" height="21" fill="#fdfdfc" />
<rect x="751" y="103" width="83" height="19" fill="url(#gBtn)" />
<text x="776.7" y="117" font-size="11.4" fill="#000" textLength="29.6" lengthAdjust="spacingAndGlyphs">Delete</text>
<rect x="589.5" y="191.5" width="147" height="92" rx="2" fill="none" stroke="#d0d0bf" shape-rendering="geometricPrecision"/>
<rect x="595" y="186" width="76" height="10" fill="#e7e7e3" />
<text x="597.7" y="195.6" font-size="11.2" fill="#1a1a1a" textLength="69.5" lengthAdjust="spacingAndGlyphs">Object settings</text>
<text x="598.5" y="211.7" font-size="11.2" fill="#1a1a1a" textLength="26.5" lengthAdjust="spacingAndGlyphs">Width</text>
<text x="598.5" y="251.2" font-size="11.2" fill="#1a1a1a" textLength="29.7" lengthAdjust="spacingAndGlyphs">Height</text>
<rect x="598" y="217" width="129" height="20" fill="#a4a4a4" />
<rect x="600" y="219" width="125" height="16" fill="#fff" />
<rect x="711" y="219" width="14" height="16" fill="#a4a4a4" />
<rect x="712" y="219" width="13" height="7" fill="#e0e0dc" />
<rect x="712" y="227" width="13" height="7" fill="#e0e0dc" />
<path d="M714,225 L718.5,221 L723,225 Z" fill="#4a5a7a" shape-rendering="geometricPrecision"/>
<path d="M714,228 L718.5,232 L723,228 Z" fill="#4a5a7a" shape-rendering="geometricPrecision"/>
<text x="600.8" y="230" font-size="11" fill="#222" textLength="4.8" lengthAdjust="spacingAndGlyphs">0</text>
<rect x="598" y="258" width="129" height="20" fill="#a4a4a4" />
<rect x="600" y="260" width="125" height="16" fill="#fff" />
<rect x="711" y="260" width="14" height="16" fill="#a4a4a4" />
<rect x="712" y="260" width="13" height="7" fill="#e0e0dc" />
<rect x="712" y="268" width="13" height="7" fill="#e0e0dc" />
<path d="M714,266 L718.5,262 L723,266 Z" fill="#4a5a7a" shape-rendering="geometricPrecision"/>
<path d="M714,269 L718.5,273 L723,269 Z" fill="#4a5a7a" shape-rendering="geometricPrecision"/>
<text x="600.8" y="271" font-size="11" fill="#222" textLength="4.8" lengthAdjust="spacingAndGlyphs">0</text>
<text x="598.5" y="305.8" font-size="11.2" fill="#1a1a1a" textLength="51.5" lengthAdjust="spacingAndGlyphs">Description</text>
<rect x="592.5" y="311.5" width="144" height="19" rx="1.5" fill="#fff" stroke="#dcdcdc" shape-rendering="geometricPrecision"/>
<rect x="743" y="127" width="274" height="13" fill="#3f3f3f" />
<text x="746.5" y="137.6" font-size="12.4" fill="#fff" textLength="60.2" lengthAdjust="spacingAndGlyphs">Map16 Tiles:</text>
<rect x="743" y="140" width="256" height="581" fill="#2f4f4f" />
<g shape-rendering="geometricPrecision">
<clipPath id="clipM16"><rect x="743" y="140" width="256" height="581"/></clipPath>
<g clip-path="url(#clipM16)">
<rect x="839" y="145" width="96" height="64" fill="url(#dark)" />
<rect x="743" y="158" width="192" height="40" fill="url(#tex)" />
<polygon points="743,140 743,163 758,146 773,161 783,159 803,147 811,148 822,153 839,163 839,140" fill="#2f4f4f" />
<polygon points="743,209 743,191 759,207 773,192 786,194 807,207 827,194 839,191 839,209" fill="#2f4f4f" />
<clipPath id="rc1"><polygon points="743,163 758,146 773,161 783,159 803,147 811,148 822,153 839,163 839,172 825,172 820,168 813,162 808,155 800,157 793,163 783,168 776,172 768,169 763,160 755,158 749,168 743,172"/></clipPath>
<polygon points="743,163 758,146 773,161 783,159 803,147 811,148 822,153 839,163 839,172 825,172 820,168 813,162 808,155 800,157 793,163 783,168 776,172 768,169 763,160 755,158 749,168 743,172" fill="#5290c2" />
<g clip-path="url(#rc1)">
<polygon points="744.357,167.5 749.168,167.307 748.47,172.31" fill="#2a5482" />
<polygon points="746.554,164.579 750.629,162.956 747.79,168.654" fill="#94d4fa" />
<polygon points="750.616,163.382 754.702,165.311 754.558,167.468" fill="#6cb2e4" />
<polygon points="753.869,159.167 756.527,157.928 754.512,161.825" fill="#86ccf6" />
<polygon points="757.334,150.691 761.312,150.768 759.881,146.714" fill="#94d4fa" />
<polygon points="758.014,147.779 762.151,149.769 762.133,151.916" fill="#2a5482" />
<polygon points="763.123,154.961 766.198,153.08 764.855,158.035" fill="#3a6ea0" />
<polygon points="765.201,161.82 768.667,163.21 765.203,165.287" fill="#86ccf6" />
<polygon points="769.781,159.252 773.22,158.842 770.032,162.691" fill="#1e3c68" />
<polygon points="772.336,163.764 775.053,161.824 773.45,166.481" fill="#3a6ea0" />
<polygon points="773.673,168.229 776.2,169.417 774.122,170.756" fill="#2a5482" />
<polygon points="780.237,162.269 784.567,161.946 781.899,157.939" fill="#94d4fa" />
<polygon points="784.683,160.906 787.858,160.123 787.492,164.08" fill="#6cb2e4" />
<polygon points="787.749,166.113 791.754,164.514 791.711,170.118" fill="#6cb2e4" />
<polygon points="792.766,154.226 796.792,153.771 793.065,158.252" fill="#3a6ea0" />
<polygon points="797.331,153.589 801.334,154.077 797.84,149.585" fill="#3a6ea0" />
<polygon points="802.329,149.624 805.795,148.241 805.477,153.089" fill="#1e3c68" />
<polygon points="805.902,149.789 809.974,148.575 809.771,145.717" fill="#6cb2e4" />
<polygon points="809.414,152.595 812.174,152.644 810.118,149.835" fill="#86ccf6" />
<polygon points="811.942,156.842 815.933,156.922 815.651,160.833" fill="#3a6ea0" />
<polygon points="815.13,155.191 819.264,155.648 816.288,159.325" fill="#6cb2e4" />
<polygon points="821.08,154.204 824.608,152.446 821.702,150.675" fill="#94d4fa" />
<polygon points="824.257,164.085 826.987,165.649 826.934,166.816" fill="#94d4fa" />
<polygon points="828.757,166.287 832.444,167.091 832.307,169.974" fill="#3a6ea0" />
<polygon points="833.043,161.169 835.711,160.445 835.71,163.838" fill="#3a6ea0" />
<polygon points="836.676,165.943 839.287,166.891 837.014,163.332" fill="#1e3c68" />
<polyline points="743,163 758,146 773,161 783,159 803,147 811,148 822,153 839,163" fill="none" stroke="#86ccf8" stroke-width="3"/>
<polyline points="743,172 749,168 755,158 763,160 768,169 776,172 783,168 793,163 800,157 808,155 813,162 820,168 825,172 839,172" fill="none" stroke="#1a3060" stroke-width="5"/>
</g>
<polyline points="743,172 749,168 755,158 763,160 768,169 776,172 783,168 793,163 800,157 808,155 813,162 820,168 825,172 839,172" fill="none" stroke="#0b1234" stroke-width="1.6"/>
<clipPath id="rc2"><polygon points="743,181 751,190 758,191 773,181 785,182 808,196 827,184 839,181 839,191 827,194 807,207 786,194 773,192 759,207 743,191"/></clipPath>
<polygon points="743,181 751,190 758,191 773,181 785,182 808,196 827,184 839,181 839,191 827,194 807,207 786,194 773,192 759,207 743,191" fill="#5290c2" />
<g clip-path="url(#rc2)">
<polygon points="743.938,189.222 748.69,190.999 744.082,184.47" fill="#2a5482" />
<polygon points="747.194,192.343 750.65,190.393 747.444,195.799" fill="#6cb2e4" />
<polygon points="750.038,198.858 754.738,198.179 754.429,194.159" fill="#1e3c68" />
<polygon points="754.084,198.986 756.793,197.105 755.713,196.276" fill="#6cb2e4" />
<polygon points="758.084,200.561 760.866,201.201 759.437,203.343" fill="#6cb2e4" />
<polygon points="763.13,189.869 767.159,188.548 766.779,185.84" fill="#6cb2e4" />
<polygon points="767.369,187.928 770.881,186.722 768.882,191.439" fill="#3a6ea0" />
<polygon points="772.551,185.759 776.509,184.599 773.084,181.801" fill="#3a6ea0" />
<polygon points="776.348,189.918 780.626,191.205 776.831,185.639" fill="#3a6ea0" />
<polygon points="778.101,184.352 781.636,184.432 780.477,180.817" fill="#1e3c68" />
<polygon points="782.281,190.232 785.477,188.398 784.546,187.037" fill="#6cb2e4" />
<polygon points="786.185,190.845 788.732,190.465 786.668,188.297" fill="#94d4fa" />
<polygon points="789.743,187.155 792.361,185.616 790.029,184.538" fill="#1e3c68" />
<polygon points="796.341,196.064 799.339,195.088 798.482,193.065" fill="#2a5482" />
<polygon points="798.55,191.574 801.616,191.732 801.453,194.64" fill="#3a6ea0" />
<polygon points="801.842,200.379 806.607,200.021 806.096,195.613" fill="#86ccf6" />
<polygon points="804.665,199.052 808.729,198.559 806.976,194.988" fill="#86ccf6" />
<polygon points="809.762,201.749 812.774,203.214 812.167,204.761" fill="#1e3c68" />
<polygon points="812.611,202.188 817.562,202.336 816.526,197.237" fill="#3a6ea0" />
<polygon points="816.595,198.036 819.134,196.367 817.715,195.497" fill="#6cb2e4" />
<polygon points="822.319,192.343 824.89,192.059 822.41,189.772" fill="#86ccf6" />
<polygon points="825.809,193.996 829.485,195.599 827.714,190.32" fill="#6cb2e4" />
<polygon points="830.783,188.487 835.656,189.519 832.924,183.615" fill="#86ccf6" />
<polygon points="834.325,188.223 837.236,189.597 835.955,185.312" fill="#6cb2e4" />
<polygon points="837.685,190.922 842.36,189.755 841.663,186.247" fill="#6cb2e4" />
<polyline points="743,181 751,190 758,191 773,181 785,182 808,196 827,184 839,181" fill="none" stroke="#80c8f6" stroke-width="3"/>
<polyline points="743,191 759,207 773,192 786,194 807,207 827,194 839,191" fill="none" stroke="#1a3060" stroke-width="6"/>
</g>
<polyline points="743,191 759,207 773,192 786,194 807,207 827,194 839,191" fill="none" stroke="#0b1234" stroke-width="1.6"/>
<polygon points="751,167 756,166 755,172 752,171" fill="#0b1234" />
<polygon points="765,166 770,165 769,171 766,170" fill="#0b1234" />
<polygon points="791,164 796,163 795,169 792,168" fill="#0b1234" />
<polygon points="809,160 814,159 813,165 810,164" fill="#0b1234" />
<polygon points="829,170 834,169 833,175 830,174" fill="#0b1234" />
<polygon points="757,159 762,161 761,163 757,161" fill="#7c8cf4" />
<polygon points="752,167 757,169 756,171 752,169" fill="#7c8cf4" />
<polygon points="801,161 806,163 805,165 801,163" fill="#7c8cf4" />
<polygon points="839,145 839,163 854,146 869,161 879,159 899,147 907,148 918,153 935,163 935,145" fill="url(#dark)" />
<polygon points="839,209 839,191 855,207 869,192 882,194 903,207 923,194 935,191 935,209" fill="url(#dark)" />
<clipPath id="rc3"><polygon points="839,163 854,146 869,161 879,159 899,147 907,148 918,153 935,163 935,172 921,172 916,168 909,162 904,155 896,157 889,163 879,168 872,172 864,169 859,160 851,158 845,168 839,172"/></clipPath>
<polygon points="839,163 854,146 869,161 879,159 899,147 907,148 918,153 935,163 935,172 921,172 916,168 909,162 904,155 896,157 889,163 879,168 872,172 864,169 859,160 851,158 845,168 839,172" fill="#5290c2" />
<g clip-path="url(#rc3)">
<polygon points="840.719,163.861 844.559,161.88 842.167,167.7" fill="#6cb2e4" />
<polygon points="843.548,162.451 848.051,160.939 843.968,166.953" fill="#6cb2e4" />
<polygon points="845.198,161.824 848.732,160.901 846.87,165.359" fill="#2a5482" />
<polygon points="849.019,160.753 853.858,160.853 849.545,155.914" fill="#2a5482" />
<polygon points="852.854,156.627 855.677,154.769 853.293,159.45" fill="#86ccf6" />
<polygon points="856.061,151.96 859.449,151.955 857.754,155.348" fill="#6cb2e4" />
<polygon points="859.556,158.167 863.85,158.289 861.431,153.873" fill="#1e3c68" />
<polygon points="861.899,162.326 865.939,161.143 864.449,166.365" fill="#6cb2e4" />
<polygon points="864.589,165.25 868.618,164.181 867.574,161.221" fill="#94d4fa" />
<polygon points="868.708,164.551 871.996,163.423 871.99,167.838" fill="#94d4fa" />
<polygon points="869.67,164.02 873.986,163.572 871.546,159.704" fill="#3a6ea0" />
<polygon points="876.716,166.8 879.718,167.541 876.77,169.802" fill="#1e3c68" />
<polygon points="881.28,161.851 885.832,160.312 883.582,157.298" fill="#3a6ea0" />
<polygon points="885.011,162.564 887.984,162.493 885.083,159.592" fill="#86ccf6" />
<polygon points="887.586,156.509 890.596,158.47 890.376,159.519" fill="#94d4fa" />
<polygon points="893.319,152.619 897.522,153.677 894.693,148.416" fill="#86ccf6" />
<polygon points="896.706,152.568 899.731,150.621 898.827,155.593" fill="#3a6ea0" />
<polygon points="899.725,152.176 904.073,153.864 902.355,156.525" fill="#2a5482" />
<polygon points="905.05,148.895 909.783,150.398 909.351,144.162" fill="#1e3c68" />
<polygon points="909.089,151.668 913.05,152.887 910.112,155.63" fill="#3a6ea0" />
<polygon points="913.396,158.909 917.933,157.442 914.893,154.373" fill="#2a5482" />
<polygon points="917.147,160.499 920.661,159.238 919.949,156.985" fill="#1e3c68" />
<polygon points="919.993,155.267 923.382,156.878 920.161,151.878" fill="#1e3c68" />
<polygon points="926.265,164.857 929.609,164.481 926.873,168.201" fill="#1e3c68" />
<polygon points="928.156,168.973 932.261,167.451 929.779,173.079" fill="#1e3c68" />
<polygon points="931.238,162.759 934.33,162.366 931.394,165.852" fill="#2a5482" />
<polyline points="839,163 854,146 869,161 879,159 899,147 907,148 918,153 935,163" fill="none" stroke="#86ccf8" stroke-width="3"/>
<polyline points="839,172 845,168 851,158 859,160 864,169 872,172 879,168 889,163 896,157 904,155 909,162 916,168 921,172 935,172" fill="none" stroke="#1a3060" stroke-width="5"/>
</g>
<polyline points="839,172 845,168 851,158 859,160 864,169 872,172 879,168 889,163 896,157 904,155 909,162 916,168 921,172 935,172" fill="none" stroke="#0b1234" stroke-width="1.6"/>
<clipPath id="rc4"><polygon points="839,181 847,190 854,191 869,181 881,182 904,196 923,184 935,181 935,191 923,194 903,207 882,194 869,192 855,207 839,191"/></clipPath>
<polygon points="839,181 847,190 854,191 869,181 881,182 904,196 923,184 935,181 935,191 923,194 903,207 882,194 869,192 855,207 839,191" fill="#5290c2" />
<g clip-path="url(#rc4)">
<polygon points="840.728,184.041 843.874,185.664 842.459,180.895" fill="#3a6ea0" />
<polygon points="844.246,193.013 849.233,192.791 847.461,198.001" fill="#1e3c68" />
<polygon points="845.364,197.607 848.829,199.029 847.242,201.071" fill="#94d4fa" />
<polygon points="850.007,195.88 853.218,196.272 851.181,192.669" fill="#2a5482" />
<polygon points="855.812,193.22 860.636,194.086 857.24,198.043" fill="#1e3c68" />
<polygon points="860.647,192.841 864.729,193.86 862.239,188.759" fill="#2a5482" />
<polygon points="864.306,185.581 869.278,183.875 868.809,180.609" fill="#3a6ea0" />
<polygon points="867.947,184.96 872.335,185.054 872.06,180.572" fill="#86ccf6" />
<polygon points="869.577,190.688 872.69,189.148 871.521,187.575" fill="#1e3c68" />
<polygon points="873.472,190.123 876.864,188.62 874.974,186.731" fill="#94d4fa" />
<polygon points="878.822,185.178 882.778,184.634 881.765,189.133" fill="#2a5482" />
<polygon points="884.652,191.831 887.748,191.843 885.607,188.735" fill="#86ccf6" />
<polygon points="885.887,191.463 890.199,191.829 888.617,195.775" fill="#1e3c68" />
<polygon points="889.394,190.35 894.344,191.865 889.59,195.3" fill="#94d4fa" />
<polygon points="892.536,192.358 895.104,190.768 893.927,194.925" fill="#86ccf6" />
<polygon points="899.231,202.313 902.133,202.837 900.314,199.411" fill="#94d4fa" />
<polygon points="901.524,198.537 905.26,199.891 901.802,202.273" fill="#94d4fa" />
<polygon points="905.7,203.325 910.295,203.102 909.134,198.73" fill="#94d4fa" />
<polygon points="910.878,195.977 915.012,195.278 913.146,200.111" fill="#6cb2e4" />
<polygon points="913.225,194.497 915.968,192.811 913.453,191.754" fill="#3a6ea0" />
<polygon points="918.498,192.015 923.057,190.319 919.47,196.574" fill="#86ccf6" />
<polygon points="921.841,190.185 926.252,189.316 922.472,185.774" fill="#3a6ea0" />
<polygon points="925.629,187.286 930.395,188.123 928.342,182.521" fill="#3a6ea0" />
<polygon points="928.752,190.789 932.014,189.674 931.909,194.051" fill="#3a6ea0" />
<polygon points="931.337,190.372 933.897,189.955 932.329,192.933" fill="#1e3c68" />
<polyline points="839,181 847,190 854,191 869,181 881,182 904,196 923,184 935,181" fill="none" stroke="#80c8f6" stroke-width="3"/>
<polyline points="839,191 855,207 869,192 882,194 903,207 923,194 935,191" fill="none" stroke="#1a3060" stroke-width="6"/>
</g>
<polyline points="839,191 855,207 869,192 882,194 903,207 923,194 935,191" fill="none" stroke="#0b1234" stroke-width="1.6"/>
<polygon points="847,167 852,166 851,172 848,171" fill="#0b1234" />
<polygon points="861,166 866,165 865,171 862,170" fill="#0b1234" />
<polygon points="887,164 892,163 891,169 888,168" fill="#0b1234" />
<polygon points="905,160 910,159 909,165 906,164" fill="#0b1234" />
<polygon points="925,170 930,169 929,175 926,174" fill="#0b1234" />
<polygon points="853,159 858,161 857,163 853,161" fill="#7c8cf4" />
<polygon points="848,167 853,169 852,171 848,169" fill="#7c8cf4" />
<polygon points="897,161 902,163 901,165 897,163" fill="#7c8cf4" />
<rect x="935" y="152" width="32" height="9" fill="url(#dark)" />
<polygon points="935,160 943,152 951,145 959,152 967,160 967,161 959,157 951,154 943,157 935,161" fill="#5a98cc" />
<polyline points="935,160 943,152 951,145 959,152 967,160" fill="none" stroke="#86ccf8" stroke-width="2"/>
<polygon points="946,156 956,156 954,159 948,159" fill="#7c8cf4" />
<rect x="935" y="193" width="32" height="9" fill="url(#dark)" />
<polygon points="935,194 943,200 951,207 959,200 967,194 967,193 959,195 951,197 943,195 935,193" fill="#5a98cc" />
<polyline points="935,194 943,200 951,207 959,200 967,194" fill="none" stroke="#0b1234" stroke-width="2"/>
<polygon points="751,140 759,140 757,145 753,145" fill="#1a2830" />
<polygon points="791,140 799,140 797,145 793,145" fill="#1a2830" />
<rect x="743" y="209" width="64" height="16" fill="url(#tex)" />
<polygon points="743,209 807,209 807,219 805,221 797,222 795,219 795,220 793,223 789,222 787,218 787,220 785,221 779,224 777,218 777,219 775,223 771,224 769,219 769,219 767,221 761,224 759,219 759,219 757,221 753,221 751,218 751,220 749,221 745,221 743,218" fill="#3e74a6" />
<rect x="743" y="209" width="64" height="8" fill="#6cb0e0" />
<rect x="743" y="209" width="64" height="3" fill="#86c8f2" />
<polygon points="744,217 750,217 749,220 745,221" fill="#5a9ccc" />
<polygon points="752,217 762,217 761,220 753,221" fill="#5a9ccc" />
<polygon points="764,217 770,217 769,220 765,222" fill="#5a9ccc" />
<polygon points="772,217 782,217 781,220 773,221" fill="#5a9ccc" />
<polygon points="784,217 790,217 789,220 785,221" fill="#5a9ccc" />
<polygon points="792,217 802,217 801,220 793,221" fill="#5a9ccc" />
<polygon points="804,217 806,217 805,220 805,222" fill="#5a9ccc" />
<polyline points="807,220 805,222 797,223 795,220 795,221 793,224 789,223 787,219 787,221 785,222 779,225 777,219 777,220 775,224 771,225 769,220 769,220 767,222 761,225 759,220 759,220 757,222 753,222 751,219 751,221 749,222 745,222 743,219" fill="none" stroke="#0b1234" stroke-width="1.3"/>
<rect x="808" y="210" width="30" height="77" rx="9" fill="#18284c"/>
<rect x="809" y="210" width="28" height="75" rx="8" fill="#74b8e4"/>
<rect x="811" y="212" width="24" height="64" fill="#84c6ee" />
<polygon points="810,214 819,220 810,226" fill="#5e9ccc" />
<polygon points="836,214 827,220 836,226" fill="#5e9ccc" />
<polygon points="812,216 817,220 812,222" fill="#96d4f8" />
<polygon points="810,228 819,234 810,240" fill="#5e9ccc" />
<polygon points="836,228 827,234 836,240" fill="#5e9ccc" />
<polygon points="812,230 817,234 812,236" fill="#96d4f8" />
<polygon points="810,242 819,248 810,254" fill="#5e9ccc" />
<polygon points="836,242 827,248 836,254" fill="#5e9ccc" />
<polygon points="812,244 817,248 812,250" fill="#96d4f8" />
<polygon points="810,256 819,262 810,268" fill="#5e9ccc" />
<polygon points="836,256 827,262 836,268" fill="#5e9ccc" />
<polygon points="812,258 817,262 812,264" fill="#96d4f8" />
<rect x="819.0" y="219" width="8" height="56" rx="3" fill="#1e3456"/>
<rect x="820.0" y="220" width="6" height="54" rx="2" fill="#4e6e84"/>
<rect x="820" y="275" width="6" height="4" fill="#6cb4e8" />
<path d="M810,273 Q810,284 823.0,284 Q836,284 836,273 L836,277 Q836,286 823.0,286 Q810,286 810,277 Z" fill="#2a4a78"/>
<rect x="839" y="209" width="64" height="16" fill="url(#tex)" />
<polygon points="839,209 903,209 903,220 901,223 897,221 895,219 895,220 893,221 887,221 885,219 885,220 883,223 875,222 873,218 873,219 871,221 863,224 861,219 861,219 859,221 855,221 853,218 853,220 851,221 845,224 843,218 843,220 841,223 841,224 839,218" fill="#3e74a6" />
<rect x="839" y="209" width="64" height="8" fill="#6cb0e0" />
<rect x="839" y="209" width="64" height="3" fill="#86c8f2" />
<polygon points="840,217 846,217 845,220 841,222" fill="#5a9ccc" />
<polygon points="848,217 858,217 857,220 849,220" fill="#5a9ccc" />
<polygon points="860,217 868,217 867,220 861,220" fill="#5a9ccc" />
<polygon points="870,217 880,217 879,220 871,221" fill="#5a9ccc" />
<polygon points="882,217 888,217 887,220 883,220" fill="#5a9ccc" />
<polygon points="890,217 900,217 899,220 891,221" fill="#5a9ccc" />
<polygon points="902,217 902,217 901,220 903,220" fill="#5a9ccc" />
<polyline points="903,221 901,224 897,222 895,220 895,221 893,222 887,222 885,220 885,221 883,224 875,223 873,219 873,220 871,222 863,225 861,220 861,220 859,222 855,222 853,219 853,221 851,222 845,225 843,219 843,221 841,224 841,225 839,219" fill="none" stroke="#0b1234" stroke-width="1.3"/>
<rect x="839" y="225" width="64" height="16" fill="url(#pebtex)" />
<polygon points="853.612,232.81 856.612,230.81 859.612,231.81 858.612,234.31 854.612,234.31" fill="#7c8cf0" />
<rect x="854.612" y="234.31" width="4" height="1.2" fill="#15203c" />
<rect x="850.612" y="231.81" width="2" height="1.5" fill="#86ccf4" />
<rect x="860.612" y="228.81" width="2" height="2" fill="#86ccf4" />
<rect x="861.612" y="233.81" width="1.5" height="1.5" fill="#6ab0e0" />
<polygon points="860.608,233.227 863.608,231.227 866.608,232.227 865.608,234.727 861.608,234.727" fill="#7c8cf0" />
<rect x="861.608" y="234.727" width="4" height="1.2" fill="#15203c" />
<rect x="857.608" y="232.227" width="2" height="1.5" fill="#86ccf4" />
<rect x="867.608" y="229.227" width="2" height="2" fill="#86ccf4" />
<rect x="868.608" y="234.227" width="1.5" height="1.5" fill="#6ab0e0" />
<polygon points="874.163,229.459 877.163,227.459 880.163,228.459 879.163,230.959 875.163,230.959" fill="#7c8cf0" />
<rect x="875.163" y="230.959" width="4" height="1.2" fill="#15203c" />
<rect x="871.163" y="228.459" width="2" height="1.5" fill="#86ccf4" />
<rect x="881.163" y="225.459" width="2" height="2" fill="#86ccf4" />
<rect x="882.163" y="230.459" width="1.5" height="1.5" fill="#6ab0e0" />
<polygon points="841.698,234.862 844.698,232.862 847.698,233.862 846.698,236.362 842.698,236.362" fill="#7c8cf0" />
<rect x="842.698" y="236.362" width="4" height="1.2" fill="#15203c" />
<rect x="838.698" y="233.862" width="2" height="1.5" fill="#86ccf4" />
<rect x="848.698" y="230.862" width="2" height="2" fill="#86ccf4" />
<rect x="849.698" y="235.862" width="1.5" height="1.5" fill="#6ab0e0" />
<rect x="839" y="241" width="64" height="16" fill="url(#tex)" />
<polygon points="839,246 847,245 847,244 857,245 857,244 867,245 867,244 877,245 877,245 885,243 885,244 893,245 893,245 901,243 901,245 903,245 903,257 839,257" fill="#6aaedc" />
<rect x="839" y="249" width="64" height="5" fill="#4a86b8" />
<polygon points="841,249 847,249 845,254" fill="#84c8f2" />
<polygon points="857,249 863,249 861,254" fill="#84c8f2" />
<polygon points="873,249 879,249 877,254" fill="#84c8f2" />
<polygon points="889,249 895,249 893,254" fill="#84c8f2" />
<rect x="839" y="253" width="64" height="4" fill="#152446" />
<rect x="839" y="255" width="64" height="2" fill="#0b1234" />
<g transform="translate(903,207)">
<polygon points="1,11 9,14 14,24 13,31 4,24" fill="#4a3ecc" />
<polygon points="25,8 30,15 29,22 22,30 18,22 20,14" fill="#4c40d0" />
<polygon points="15,0 21,6 21,20 16,25 10,19 10,6" fill="#5246d8" />
<polygon points="15,20 20,21 19,31 13,31" fill="#4034c0" />
<polygon points="21,22 27,23 24,31 19,31" fill="#463ac8" />
<polygon points="10,8 14,25 12,26 8,12" fill="#2a1e96" />
<polygon points="18,19 23,29 21,30 17,21" fill="#2c2098" />
<polygon points="4,23 14,31 11,31 3,24" fill="#6a5ef2" />
<polygon points="15,0 21,7 20,9 15,3" fill="#6a5ef2" />
<polygon points="25,8 31,15 30,17 25,11" fill="#5e52e8" />
</g>
<g transform="translate(935,207)">
<polygon points="1,11 9,14 14,24 13,31 4,24" fill="#4a3ecc" />
<polygon points="25,8 30,15 29,22 22,30 18,22 20,14" fill="#4c40d0" />
<polygon points="15,0 21,6 21,20 16,25 10,19 10,6" fill="#5246d8" />
<polygon points="15,20 20,21 19,31 13,31" fill="#4034c0" />
<polygon points="21,22 27,23 24,31 19,31" fill="#463ac8" />
<polygon points="10,8 14,25 12,26 8,12" fill="#2a1e96" />
<polygon points="18,19 23,29 21,30 17,21" fill="#2c2098" />
<polygon points="4,23 14,31 11,31 3,24" fill="#6a5ef2" />
<polygon points="15,0 21,7 20,9 15,3" fill="#6a5ef2" />
<polygon points="25,8 31,15 30,17 25,11" fill="#5e52e8" />
</g>
<rect x="743" y="225" width="32" height="32" fill="url(#tex)" />
<polygon points="743,225 775,225 775,247 761,251 751,243 743,236" fill="#78b4dc" />
<polygon points="743,225 757,225 753,233 743,231" fill="#92ccf0" />
<polygon points="759,227 773,229 769,239 761,235" fill="#88c4ea" />
<polygon points="753,234 761,237 763,247 755,243" fill="#4a86b8" />
<polyline points="743,236 751,243 761,251 775,247" fill="none" stroke="#15203c" stroke-width="1.5"/>
<polyline points="757,228 763,235 767,241" fill="none" stroke="#1e3050" stroke-width="1.2"/>
<polygon points="753,239 757,241 761,251 755,247" fill="#2a4466" />
<polyline points="745,229 751,234 749,239" fill="none" stroke="#2a4a70" stroke-width="1"/>
<polygon points="765,239 773,237 775,245 769,247" fill="#5a90c0" />
<rect x="743" y="257" width="32" height="32" fill="url(#tex)" />
<polygon points="743,257 775,257 775,279 761,283 751,275 743,268" fill="#78b4dc" />
<polygon points="743,257 757,257 753,265 743,263" fill="#92ccf0" />
<polygon points="759,259 773,261 769,271 761,267" fill="#88c4ea" />
<polygon points="753,266 761,269 763,279 755,275" fill="#4a86b8" />
<polyline points="743,268 751,275 761,283 775,279" fill="none" stroke="#15203c" stroke-width="1.5"/>
<polyline points="757,260 763,267 767,273" fill="none" stroke="#1e3050" stroke-width="1.2"/>
<polygon points="753,271 757,273 761,283 755,279" fill="#2a4466" />
<polyline points="745,261 751,266 749,271" fill="none" stroke="#2a4a70" stroke-width="1"/>
<polygon points="765,271 773,269 775,277 769,279" fill="#5a90c0" />
<rect x="743" y="289" width="32" height="32" fill="url(#tex)" />
<polygon points="743,289 775,289 775,311 761,315 751,307 743,300" fill="#78b4dc" />
<polygon points="743,289 757,289 753,297 743,295" fill="#92ccf0" />
<polygon points="759,291 773,293 769,303 761,299" fill="#88c4ea" />
<polygon points="753,298 761,301 763,311 755,307" fill="#4a86b8" />
<polyline points="743,300 751,307 761,315 775,311" fill="none" stroke="#15203c" stroke-width="1.5"/>
<polyline points="757,292 763,299 767,305" fill="none" stroke="#1e3050" stroke-width="1.2"/>
<polygon points="753,303 757,305 761,315 755,311" fill="#2a4466" />
<polyline points="745,293 751,298 749,303" fill="none" stroke="#2a4a70" stroke-width="1"/>
<polygon points="765,303 773,301 775,309 769,311" fill="#5a90c0" />
<polygon points="746,311 752,307 755,311 748,316" fill="#7484f0" />
<rect x="743" y="321" width="32" height="32" fill="url(#tex)" />
<polygon points="743,321 775,321 775,345 771,350 757,350 753,344 743,341" fill="#6aaedc" />
<polygon points="743,321 761,321 755,331 743,329" fill="#84c8f2" />
<polygon points="755,333 769,331 773,343 759,347" fill="#7cc0ec" />
<polyline points="753,344 757,350 771,350 775,345" fill="none" stroke="#15203c" stroke-width="2"/>
<polyline points="743,341 753,344" fill="none" stroke="#15203c" stroke-width="1.5"/>
<polyline points="757,325 763,327" fill="none" stroke="#1e3050" stroke-width="1.2"/>
<polygon points="744,335 751,333 752,339 745,341" fill="#7484f0" />
<rect x="775" y="225" width="32" height="96" fill="url(#dark)" />
<rect x="807" y="289" width="32" height="32" fill="url(#dark)" />
<g transform="translate(775,224)">
<polygon points="1,11 9,14 14,24 13,31 4,24" fill="#4a3ecc" />
<polygon points="25,8 30,15 29,22 22,30 18,22 20,14" fill="#4c40d0" />
<polygon points="15,0 21,6 21,20 16,25 10,19 10,6" fill="#5246d8" />
<polygon points="15,20 20,21 19,31 13,31" fill="#4034c0" />
<polygon points="21,22 27,23 24,31 19,31" fill="#463ac8" />
<polygon points="10,8 14,25 12,26 8,12" fill="#2a1e96" />
<polygon points="18,19 23,29 21,30 17,21" fill="#2c2098" />
<polygon points="4,23 14,31 11,31 3,24" fill="#6a5ef2" />
<polygon points="15,0 21,7 20,9 15,3" fill="#6a5ef2" />
<polygon points="25,8 31,15 30,17 25,11" fill="#5e52e8" />
</g>
<g transform="translate(775,257)">
<polygon points="1,11 9,14 14,24 13,31 4,24" fill="#4a3ecc" />
<polygon points="25,8 30,15 29,22 22,30 18,22 20,14" fill="#4c40d0" />
<polygon points="15,0 21,6 21,20 16,25 10,19 10,6" fill="#5246d8" />
<polygon points="15,20 20,21 19,31 13,31" fill="#4034c0" />
<polygon points="21,22 27,23 24,31 19,31" fill="#463ac8" />
<polygon points="10,8 14,25 12,26 8,12" fill="#2a1e96" />
<polygon points="18,19 23,29 21,30 17,21" fill="#2c2098" />
<polygon points="4,23 14,31 11,31 3,24" fill="#6a5ef2" />
<polygon points="15,0 21,7 20,9 15,3" fill="#6a5ef2" />
<polygon points="25,8 31,15 30,17 25,11" fill="#5e52e8" />
</g>
<g transform="translate(775,321) scale(1,-1)">
<polygon points="1,11 9,14 14,24 13,31 4,24" fill="#4a3ecc" />
<polygon points="25,8 30,15 29,22 22,30 18,22 20,14" fill="#4c40d0" />
<polygon points="15,0 21,6 21,20 16,25 10,19 10,6" fill="#5246d8" />
<polygon points="15,20 20,21 19,31 13,31" fill="#4034c0" />
<polygon points="21,22 27,23 24,31 19,31" fill="#463ac8" />
<polygon points="10,8 14,25 12,26 8,12" fill="#2a1e96" />
<polygon points="18,19 23,29 21,30 17,21" fill="#2c2098" />
<polygon points="4,23 14,31 11,31 3,24" fill="#6a5ef2" />
<polygon points="15,0 21,7 20,9 15,3" fill="#6a5ef2" />
<polygon points="25,8 31,15 30,17 25,11" fill="#5e52e8" />
</g>
<g transform="translate(807,321) scale(1,-1)">
<polygon points="1,11 9,14 14,24 13,31 4,24" fill="#4a3ecc" />
<polygon points="25,8 30,15 29,22 22,30 18,22 20,14" fill="#4c40d0" />
<polygon points="15,0 21,6 21,20 16,25 10,19 10,6" fill="#5246d8" />
<polygon points="15,20 20,21 19,31 13,31" fill="#4034c0" />
<polygon points="21,22 27,23 24,31 19,31" fill="#463ac8" />
<polygon points="10,8 14,25 12,26 8,12" fill="#2a1e96" />
<polygon points="18,19 23,29 21,30 17,21" fill="#2c2098" />
<polygon points="4,23 14,31 11,31 3,24" fill="#6a5ef2" />
<polygon points="15,0 21,7 20,9 15,3" fill="#6a5ef2" />
<polygon points="25,8 31,15 30,17 25,11" fill="#5e52e8" />
</g>
<g transform="translate(775,353) scale(1,-1)">
<polygon points="1,11 9,14 14,24 13,31 4,24" fill="#4a3ecc" />
<polygon points="25,8 30,15 29,22 22,30 18,22 20,14" fill="#4c40d0" />
<polygon points="15,0 21,6 21,20 16,25 10,19 10,6" fill="#5246d8" />
<polygon points="15,20 20,21 19,31 13,31" fill="#4034c0" />
<polygon points="21,22 27,23 24,31 19,31" fill="#463ac8" />
<polygon points="10,8 14,25 12,26 8,12" fill="#2a1e96" />
<polygon points="18,19 23,29 21,30 17,21" fill="#2c2098" />
<polygon points="4,23 14,31 11,31 3,24" fill="#6a5ef2" />
<polygon points="15,0 21,7 20,9 15,3" fill="#6a5ef2" />
<polygon points="25,8 31,15 30,17 25,11" fill="#5e52e8" />
</g>
<g transform="translate(807,353) scale(1,-1)">
<polygon points="1,11 9,14 14,24 13,31 4,24" fill="#4a3ecc" />
<polygon points="25,8 30,15 29,22 22,30 18,22 20,14" fill="#4c40d0" />
<polygon points="15,0 21,6 21,20 16,25 10,19 10,6" fill="#5246d8" />
<polygon points="15,20 20,21 19,31 13,31" fill="#4034c0" />
<polygon points="21,22 27,23 24,31 19,31" fill="#463ac8" />
<polygon points="10,8 14,25 12,26 8,12" fill="#2a1e96" />
<polygon points="18,19 23,29 21,30 17,21" fill="#2c2098" />
<polygon points="4,23 14,31 11,31 3,24" fill="#6a5ef2" />
<polygon points="15,0 21,7 20,9 15,3" fill="#6a5ef2" />
<polygon points="25,8 31,15 30,17 25,11" fill="#5e52e8" />
</g>
<rect x="743" y="353" width="32" height="16" fill="#5a9acc" />
<polygon points="743,355 756,354 756,367 745,366" fill="#82c2ec" />
<polygon points="762,354 775,355 773,366 762,367" fill="#82c2ec" />
<polygon points="745,356 751,355 749,361" fill="#a0d8fa" />
<polygon points="767,355 773,356 769,361" fill="#a0d8fa" />
<rect x="757" y="353" width="4" height="16" fill="#1a2a48" />
<rect x="743" y="367" width="32" height="2" fill="#2a4468" />
<path d="M759,353 L791,353 C791,367.4 781.4,369 775.0,369 C768.6,369 759,367.4 759,353 Z" fill="#1a2848"/>
<path d="M760,353 L790,353 C790,364.2 781.4,366 775.0,366 C768.6,366 760,364.2 760,353 Z" fill="#64aadc"/>
<rect x="771" y="356" width="8" height="5" fill="#88ccf6" />
<circle cx="768.0" cy="357" r="2" fill="#4c8cc0"/><circle cx="782.0" cy="357" r="2" fill="#4c8cc0"/>
<rect x="759" y="353" width="16" height="16" fill="none" />
<rect x="791" y="353" width="64" height="16" fill="url(#dark)" />
<path d="M791,353 L823,353 C823,367.4 813.4,369 807.0,369 C800.6,369 791,367.4 791,353 Z" fill="#1a2848"/>
<path d="M792,353 L822,353 C822,364.2 813.4,366 807.0,366 C800.6,366 792,364.2 792,353 Z" fill="#64aadc"/>
<rect x="803" y="356" width="8" height="5" fill="#88ccf6" />
<circle cx="800.0" cy="357" r="2" fill="#4c8cc0"/><circle cx="814.0" cy="357" r="2" fill="#4c8cc0"/>
<path d="M823,353 L855,353 C855,367.4 845.4,369 839.0,369 C832.6,369 823,367.4 823,353 Z" fill="#1a2848"/>
<path d="M824,353 L854,353 C854,364.2 845.4,366 839.0,366 C832.6,366 824,364.2 824,353 Z" fill="#64aadc"/>
<rect x="835" y="356" width="8" height="5" fill="#88ccf6" />
<circle cx="832.0" cy="357" r="2" fill="#4c8cc0"/><circle cx="846.0" cy="357" r="2" fill="#4c8cc0"/>
<rect x="856" y="353" width="11" height="16" fill="#18284a" />
<rect x="857" y="354" width="9" height="14" fill="#62a6d8" />
<polygon points="857,354 866,354 861.5,360" fill="#88ccf6" />
<polygon points="857,368 866,368 861.5,362" fill="#80c4f0" />
<rect x="860.5" y="359" width="2" height="4" fill="#2c4c70" />
<rect x="873" y="353" width="11" height="16" fill="#18284a" />
<rect x="874" y="354" width="9" height="14" fill="#62a6d8" />
<polygon points="874,354 883,354 878.5,360" fill="#88ccf6" />
<polygon points="874,368 883,368 878.5,362" fill="#80c4f0" />
<rect x="877.5" y="359" width="2" height="4" fill="#2c4c70" />
<rect x="743" y="369" width="32" height="16" fill="url(#tex)" />
<polygon points="743,369 775,369 775,379 773,383 767,384 765,378 765,380 763,383 759,381 757,379 757,380 755,381 747,381 745,378 745,380 743,383 745,382 743,378" fill="#3e74a6" />
<rect x="743" y="369" width="32" height="8" fill="#6cb0e0" />
<rect x="743" y="369" width="32" height="3" fill="#86c8f2" />
<polygon points="744,377 750,377 749,380 745,382" fill="#5a9ccc" />
<polygon points="752,377 762,377 761,380 753,382" fill="#5a9ccc" />
<polygon points="764,377 772,377 771,380 765,382" fill="#5a9ccc" />
<polygon points="774,377 774,377 773,380 775,381" fill="#5a9ccc" />
<polyline points="775,380 773,384 767,385 765,379 765,381 763,384 759,382 757,380 757,381 755,382 747,382 745,379 745,381 743,384 745,383 743,379" fill="none" stroke="#0b1234" stroke-width="1.3"/>
<path d="M759,369 L791,369 C791,383.4 781.4,385 775.0,385 C768.6,385 759,383.4 759,369 Z" fill="#1a2848"/>
<path d="M760,369 L790,369 C790,380.2 781.4,382 775.0,382 C768.6,382 760,380.2 760,369 Z" fill="#64aadc"/>
<rect x="771" y="372" width="8" height="5" fill="#88ccf6" />
<circle cx="768.0" cy="373" r="2" fill="#4c8cc0"/><circle cx="782.0" cy="373" r="2" fill="#4c8cc0"/>
<path d="M791,369 L823,369 C823,383.4 813.4,385 807.0,385 C800.6,385 791,383.4 791,369 Z" fill="#1a2848"/>
<path d="M792,369 L822,369 C822,380.2 813.4,382 807.0,382 C800.6,382 792,380.2 792,369 Z" fill="#64aadc"/>
<rect x="803" y="372" width="8" height="5" fill="#88ccf6" />
<circle cx="800.0" cy="373" r="2" fill="#4c8cc0"/><circle cx="814.0" cy="373" r="2" fill="#4c8cc0"/>
<rect x="823" y="369" width="30" height="16" fill="#1a2848" />
<rect x="824" y="370" width="28" height="14" fill="#64aadc" />
<rect x="826" y="372" width="10" height="11" fill="#84c8f2" />
<rect x="840" y="372" width="10" height="11" fill="#84c8f2" />
<rect x="836" y="373" width="4" height="12" fill="#2a4060" />
<rect x="743" y="353" width="32" height="16" fill="#5a9acc" />
<polygon points="743,355 756,354 756,367 745,366" fill="#82c2ec" />
<polygon points="762,354 775,355 773,366 762,367" fill="#82c2ec" />
<polygon points="745,356 751,355 749,361" fill="#a0d8fa" />
<polygon points="767,355 773,356 769,361" fill="#a0d8fa" />
<rect x="757" y="353" width="4" height="16" fill="#1a2a48" />
<rect x="743" y="367" width="32" height="2" fill="#2a4468" />
<rect x="743" y="369" width="32" height="16" fill="url(#tex)" />
<polygon points="743,369 775,369 775,379 773,383 767,384 765,378 765,380 763,383 759,381 757,379 757,380 755,381 747,381 745,378 745,380 743,383 745,382 743,378" fill="#3e74a6" />
<rect x="743" y="369" width="32" height="8" fill="#6cb0e0" />
<rect x="743" y="369" width="32" height="3" fill="#86c8f2" />
<polygon points="744,377 750,377 749,380 745,382" fill="#5a9ccc" />
<polygon points="752,377 762,377 761,380 753,382" fill="#5a9ccc" />
<polygon points="764,377 772,377 771,380 765,382" fill="#5a9ccc" />
<polygon points="774,377 774,377 773,380 775,381" fill="#5a9ccc" />
<polyline points="775,380 773,384 767,385 765,379 765,381 763,384 759,382 757,380 757,381 755,382 747,382 745,379 745,381 743,384 745,383 743,379" fill="none" stroke="#0b1234" stroke-width="1.3"/>
<polygon points="743,385 775,385 775,393 759,409 743,393" fill="url(#tex)" />
<polygon points="743,392 756,411 759,414 762,411 775,392 775,386 762,403 759,405 756,403 743,386" fill="#5a9acc" />
<polyline points="743,388 756,405 759,407 762,405 775,388" fill="none" stroke="#86c8f2" stroke-width="2.5"/>
<polyline points="743,392 756,411 759,414 762,411 775,392" fill="none" stroke="#0b1234" stroke-width="2.2"/>
<polygon points="757,404 761,404 760,410 758,410" fill="#2a4a70" />
<ellipse cx="759" cy="422" rx="7.5" ry="7" fill="#1e2a30"/>
<ellipse cx="759" cy="422" rx="4" ry="3.5" fill="#2a3a44"/>
<polygon points="743,427 747,429 743,433" fill="#1a2228" />
<polygon points="775,427 771,429 775,433" fill="#1a2228" />
<rect x="791" y="417" width="15" height="16" fill="#6aaee0" />
<polygon points="791,417 804,417 800,426 792,424" fill="#88ccf6" />
<polygon points="792,428 800,426 804,433 793,433" fill="#5a96c8" />
<rect x="804" y="417" width="2" height="16" fill="#15203c" />
<polygon points="791,425 795,429 793,433 791,433" fill="#1a2848" />
<polygon points="811,417 839,417 839,433 824,433 824,426" fill="#30506a" />
<polygon points="818,417 839,417 839,428 830,424" fill="#6aaee0" />
<polygon points="826,417 839,417 839,422 834,420" fill="#8ccff8" />
<polyline points="811,417.5 822,421 832,426 839,431" fill="none" stroke="#101a40" stroke-width="2.2"/>
<polygon points="824,427 832,428 839,433 824,433" fill="#1e2e3a" />
<rect x="903" y="353" width="13" height="48" fill="#5aa4d8" />
<rect x="905" y="353" width="5" height="48" fill="#86cbf6" />
<rect x="911" y="353" width="3" height="48" fill="#3a6c9c" />
<rect x="916" y="353" width="67" height="48" fill="url(#pebtex)" />
<polygon points="927.237,383.901 930.237,381.901 933.237,382.901 932.237,385.401 928.237,385.401" fill="#7c8cf0" />
<rect x="928.237" y="385.401" width="4" height="1.2" fill="#15203c" />
<rect x="924.237" y="382.901" width="2" height="1.5" fill="#86ccf4" />
<rect x="934.237" y="379.901" width="2" height="2" fill="#86ccf4" />
<rect x="935.237" y="384.901" width="1.5" height="1.5" fill="#6ab0e0" />
<polygon points="953.56,375.685 956.56,373.685 959.56,374.685 958.56,377.185 954.56,377.185" fill="#7c8cf0" />
<rect x="954.56" y="377.185" width="4" height="1.2" fill="#15203c" />
<rect x="950.56" y="374.685" width="2" height="1.5" fill="#86ccf4" />
<rect x="960.56" y="371.685" width="2" height="2" fill="#86ccf4" />
<rect x="961.56" y="376.685" width="1.5" height="1.5" fill="#6ab0e0" />
<polygon points="930.097,387.913 933.097,385.913 936.097,386.913 935.097,389.413 931.097,389.413" fill="#7c8cf0" />
<rect x="931.097" y="389.413" width="4" height="1.2" fill="#15203c" />
<rect x="927.097" y="386.913" width="2" height="1.5" fill="#86ccf4" />
<rect x="937.097" y="383.913" width="2" height="2" fill="#86ccf4" />
<rect x="938.097" y="388.913" width="1.5" height="1.5" fill="#6ab0e0" />
<polygon points="963.24,376.986 966.24,374.986 969.24,375.986 968.24,378.486 964.24,378.486" fill="#7c8cf0" />
<rect x="964.24" y="378.486" width="4" height="1.2" fill="#15203c" />
<rect x="960.24" y="375.986" width="2" height="1.5" fill="#86ccf4" />
<rect x="970.24" y="372.986" width="2" height="2" fill="#86ccf4" />
<rect x="971.24" y="377.986" width="1.5" height="1.5" fill="#6ab0e0" />
<polygon points="946.285,366.206 949.285,364.206 952.285,365.206 951.285,367.706 947.285,367.706" fill="#7c8cf0" />
<rect x="947.285" y="367.706" width="4" height="1.2" fill="#15203c" />
<rect x="943.285" y="365.206" width="2" height="1.5" fill="#86ccf4" />
<rect x="953.285" y="362.206" width="2" height="2" fill="#86ccf4" />
<rect x="954.285" y="367.206" width="1.5" height="1.5" fill="#6ab0e0" />
<polygon points="918.178,371.471 921.178,369.471 924.178,370.471 923.178,372.971 919.178,372.971" fill="#7c8cf0" />
<rect x="919.178" y="372.971" width="4" height="1.2" fill="#15203c" />
<rect x="915.178" y="370.471" width="2" height="1.5" fill="#86ccf4" />
<rect x="925.178" y="367.471" width="2" height="2" fill="#86ccf4" />
<rect x="926.178" y="372.471" width="1.5" height="1.5" fill="#6ab0e0" />
<polygon points="950.78,359.701 953.78,357.701 956.78,358.701 955.78,361.201 951.78,361.201" fill="#7c8cf0" />
<rect x="951.78" y="361.201" width="4" height="1.2" fill="#15203c" />
<rect x="947.78" y="358.701" width="2" height="1.5" fill="#86ccf4" />
<rect x="957.78" y="355.701" width="2" height="2" fill="#86ccf4" />
<rect x="958.78" y="360.701" width="1.5" height="1.5" fill="#6ab0e0" />
<polygon points="962.45,366.058 965.45,364.058 968.45,365.058 967.45,367.558 963.45,367.558" fill="#7c8cf0" />
<rect x="963.45" y="367.558" width="4" height="1.2" fill="#15203c" />
<rect x="959.45" y="365.058" width="2" height="1.5" fill="#86ccf4" />
<rect x="969.45" y="362.058" width="2" height="2" fill="#86ccf4" />
<rect x="970.45" y="367.058" width="1.5" height="1.5" fill="#6ab0e0" />
<polygon points="931.031,358.651 934.031,356.651 937.031,357.651 936.031,360.151 932.031,360.151" fill="#7c8cf0" />
<rect x="932.031" y="360.151" width="4" height="1.2" fill="#15203c" />
<rect x="928.031" y="357.651" width="2" height="1.5" fill="#86ccf4" />
<rect x="938.031" y="354.651" width="2" height="2" fill="#86ccf4" />
<rect x="939.031" y="359.651" width="1.5" height="1.5" fill="#6ab0e0" />
<rect x="743" y="433" width="32" height="32" fill="url(#tex)" />
<polygon points="743,433 775,433 775,455 761,459 751,451 743,444" fill="#78b4dc" />
<polygon points="743,433 757,433 753,441 743,439" fill="#92ccf0" />
<polygon points="759,435 773,437 769,447 761,443" fill="#88c4ea" />
<polygon points="753,442 761,445 763,455 755,451" fill="#4a86b8" />
<polyline points="743,444 751,451 761,459 775,455" fill="none" stroke="#15203c" stroke-width="1.5"/>
<polyline points="757,436 763,443 767,449" fill="none" stroke="#1e3050" stroke-width="1.2"/>
<polygon points="753,447 757,449 761,459 755,455" fill="#2a4466" />
<polyline points="745,437 751,442 749,447" fill="none" stroke="#2a4a70" stroke-width="1"/>
<polygon points="765,447 773,445 775,453 769,455" fill="#5a90c0" />
<polygon points="746,455 752,451 755,455 748,460" fill="#7484f0" />
<rect x="743" y="465" width="32" height="16" fill="#5a9acc" />
<polygon points="743,467 756,466 756,479 745,478" fill="#82c2ec" />
<polygon points="762,466 775,467 773,478 762,479" fill="#82c2ec" />
<polygon points="745,468 751,467 749,473" fill="#a0d8fa" />
<polygon points="767,467 773,468 769,473" fill="#a0d8fa" />
<rect x="757" y="465" width="4" height="16" fill="#1a2a48" />
<rect x="743" y="479" width="32" height="2" fill="#2a4468" />
<rect x="744" y="481" width="14" height="48" fill="#1a2a48" />
<rect x="745" y="481" width="12" height="47" fill="#62a4d6" />
<rect x="747" y="481" width="6" height="47" fill="#86c6f0" />
<polygon points="745,483 749,487 745,492" fill="#2a4a78" />
<polygon points="757,488 753,491 757,494" fill="#4a86b8" />
<rect x="749" y="489" width="5" height="3" fill="#9ad6fa" />
<polygon points="745,495 749,499 745,504" fill="#2a4a78" />
<polygon points="757,500 753,503 757,506" fill="#4a86b8" />
<rect x="749" y="501" width="5" height="3" fill="#9ad6fa" />
<polygon points="745,507 749,511 745,516" fill="#2a4a78" />
<polygon points="757,512 753,515 757,518" fill="#4a86b8" />
<rect x="749" y="513" width="5" height="3" fill="#9ad6fa" />
<polygon points="745,519 749,523 745,528" fill="#2a4a78" />
<polygon points="757,524 753,527 757,530" fill="#4a86b8" />
<rect x="749" y="525" width="5" height="3" fill="#9ad6fa" />
<rect x="743" y="529" width="32" height="16" fill="#5a9acc" />
<polygon points="743,531 756,530 756,543 745,542" fill="#82c2ec" />
<polygon points="762,530 775,531 773,542 762,543" fill="#82c2ec" />
<polygon points="745,532 751,531 749,537" fill="#a0d8fa" />
<polygon points="767,531 773,532 769,537" fill="#a0d8fa" />
<rect x="757" y="529" width="4" height="16" fill="#1a2a48" />
<rect x="743" y="543" width="32" height="2" fill="#2a4468" />
</g></g>
<rect x="999" y="140" width="5" height="581" fill="#ecece8" />
<rect x="1004" y="140" width="13" height="581" fill="url(#gScroll)" />
<rect x="1004" y="140" width="13" height="14" fill="url(#gScrollBtn)" />
<rect x="1004" y="707" width="13" height="14" fill="url(#gScrollBtn)" />
<path d="M1004,160 Q1004,154 1010.5,154 Q1017,154 1017,160 L1017,290 L1004,290 Z" fill="url(#gThumbL)" shape-rendering="geometricPrecision"/>
<path d="M1004,295 Q1004,288 1010.5,288 Q1017,288 1017,295 L1017,701 Q1017,708 1010.5,708 Q1004,708 1004,701 Z" fill="url(#gThumbBlk)" shape-rendering="geometricPrecision"/>
<path d="M1007.5,148 L1010.5,145 L1013.5,148 Z" fill="#505050" shape-rendering="geometricPrecision"/>
<path d="M1007.5,713.5 L1010.5,716.5 L1013.5,713.5 Z" fill="#505050" shape-rendering="geometricPrecision"/>
</svg></body></html>
